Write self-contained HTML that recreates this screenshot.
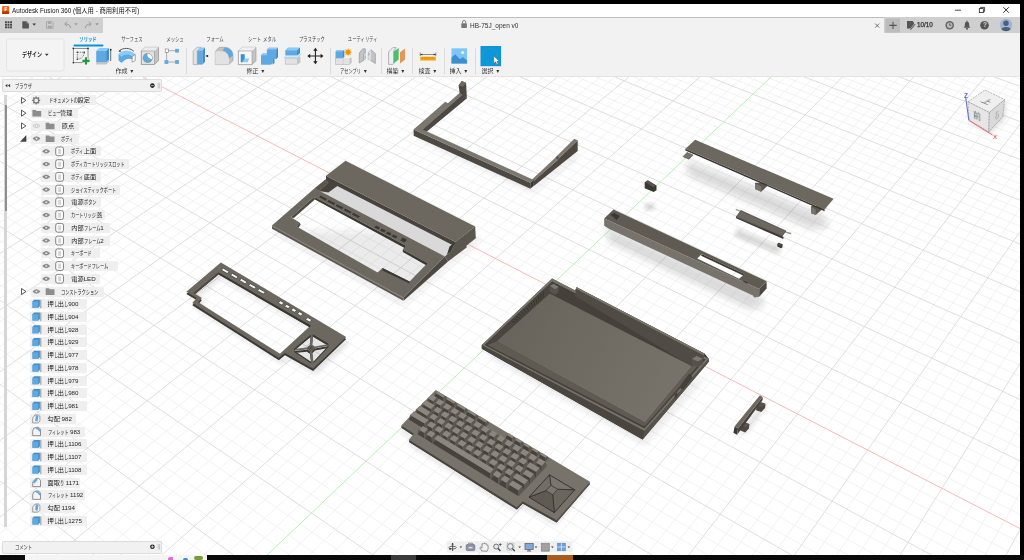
<!DOCTYPE html>
<html lang="ja"><head><meta charset="utf-8"><title>Autodesk Fusion 360</title>
<style>
*{box-sizing:border-box;margin:0;padding:0}
html,body{width:1024px;height:560px;overflow:hidden;background:#fff}
body{position:relative;font-family:"Liberation Sans","Noto Sans CJK JP",sans-serif;color:#222}
.abs{position:absolute}
.t{will-change:transform;position:absolute;white-space:nowrap;line-height:1;transform:translate(-50%,-50%)}
.tl{will-change:transform;position:absolute;white-space:nowrap;line-height:1;transform:translate(0,-50%)}
#blackTop{left:0;top:0;width:1024px;height:4px;background:#000}
#blackRight{left:1020px;top:0;width:4px;height:560px;background:#000}
#blackBot{left:0;top:555px;width:1024px;height:5px;background:#0a0a0a}
#titlebar{left:0;top:4px;width:1020px;height:13px;background:#fff}
#tabbar{left:0;top:16.5px;width:1020px;height:16.5px;background:#f2f2f2;border-top:1px solid #bdbdbd}
#qa{left:0;top:17px;width:102.5px;height:16px;background:#cfcfcf}
#rt{left:883.5px;top:17px;width:136.5px;height:16px;background:#cfcfcf}
#toolbar{left:0;top:33px;width:1020px;height:44px;background:#f2f2f2;border-bottom:1px solid #e4e4e4}
#viewport{left:0;top:77px;width:1020px;height:478px;background:#fff}
.sep{position:absolute;width:1px;background:#dadada;top:48px;height:26px}
.lbl{font-size:6.0px;color:#333}
.tab{font-size:6.2px;color:#444}
.ico{position:absolute;overflow:visible}
.row{will-change:transform;position:absolute;height:10px;background:rgba(238,238,238,.93);border-radius:1px}
.row>span{position:absolute;top:5px;transform:translateY(-50%);font-size:6.2px;line-height:1;white-space:nowrap;color:#222}

</style></head><body>
<div id="viewport" class="abs"><svg id="scene" width="1020" height="478" viewBox="0 77 1020 478">
<path d="M0.0,79.7L4.9,77.0M0.0,87.5L19.0,77.0M0.0,95.5L33.2,77.0M0.0,103.6L47.3,77.0M0.0,120.2L75.6,77.0M0.0,128.7L89.7,77.0M0.0,137.3L103.9,77.0M0.0,146.1L118.0,77.0M0.0,164.1L146.3,77.0M0.0,173.4L160.5,77.0M0.0,182.8L174.6,77.0M0.0,192.3L188.8,77.0M0.0,212.0L217.1,77.0M0.0,222.1L231.3,77.0M0.0,232.3L245.4,77.0M0.0,242.8L259.6,77.0M0.0,264.3L288.0,77.0M0.0,275.3L302.1,77.0M0.0,286.6L316.3,77.0M0.0,298.1L330.5,77.0M0.0,321.7L358.9,77.0M0.0,333.9L373.0,77.0M0.0,346.2L387.2,77.0M0.0,358.9L401.4,77.0M0.0,385.0L429.8,77.0M0.0,398.4L444.0,77.0M0.0,412.1L458.2,77.0M0.0,426.1L472.4,77.0M0.0,455.1L500.8,77.0M0.0,470.0L515.0,77.0M0.0,485.3L529.2,77.0M0.0,500.9L543.4,77.0M0.0,533.2L571.8,77.0M0.0,549.9L586.0,77.0M14.7,555.0L600.3,77.0M35.8,555.0L614.5,77.0M77.8,555.0L642.9,77.0M98.8,555.0L657.2,77.0M119.9,555.0L671.4,77.0M140.9,555.0L685.6,77.0M183.0,555.0L714.1,77.0M204.0,555.0L728.3,77.0M225.1,555.0L742.6,77.0M246.1,555.0L756.8,77.0M288.2,555.0L785.3,77.0M309.3,555.0L799.5,77.0M330.4,555.0L813.8,77.0M351.4,555.0L828.0,77.0M393.6,555.0L856.5,77.0M414.6,555.0L870.8,77.0M435.7,555.0L885.0,77.0M456.8,555.0L899.3,77.0M499.0,555.0L927.8,77.0M520.1,555.0L942.1,77.0M541.2,555.0L956.4,77.0M562.3,555.0L970.6,77.0M604.5,555.0L999.2,77.0M625.6,555.0L1013.5,77.0M646.7,555.0L1020.0,86.7M667.8,555.0L1020.0,105.1M710.0,555.0L1020.0,144.1M731.2,555.0L1020.0,164.7M752.3,555.0L1020.0,186.1M773.4,555.0L1020.0,208.4M815.7,555.0L1020.0,255.8M836.8,555.0L1020.0,281.0M858.0,555.0L1020.0,307.3M879.1,555.0L1020.0,334.8M921.4,555.0L1020.0,393.7M942.5,555.0L1020.0,425.2M963.7,555.0L1020.0,458.4M984.9,555.0L1020.0,493.2M0.0,546.0L10.9,555.0M0.0,523.7L38.7,555.0M0.0,501.9L66.5,555.0M0.0,460.4L122.2,555.0M0.0,440.6L150.0,555.0M0.0,421.3L177.8,555.0M0.0,402.6L205.7,555.0M0.0,366.6L261.4,555.0M0.0,349.4L289.3,555.0M0.0,332.6L317.1,555.0M0.0,316.2L345.0,555.0M0.0,284.8L400.8,555.0M0.0,269.6L428.6,555.0M0.0,254.9L456.5,555.0M0.0,240.5L484.4,555.0M0.0,212.8L540.2,555.0M0.0,199.4L568.2,555.0M0.0,186.3L596.1,555.0M0.0,173.6L624.0,555.0M0.0,148.9L679.9,555.0M0.0,137.0L707.8,555.0M0.0,125.4L735.8,555.0M0.0,114.0L763.7,555.0M0.0,92.0L819.6,555.0M0.0,81.3L847.6,555.0M11.2,77.0L875.6,555.0M30.0,77.0L903.5,555.0M67.6,77.0L959.5,555.0M86.4,77.0L987.5,555.0M105.2,77.0L1015.5,555.0M124.1,77.0L1020.0,542.8M161.8,77.0L1020.0,514.5M180.6,77.0L1020.0,500.7M199.4,77.0L1020.0,487.2M218.3,77.0L1020.0,474.0M256.0,77.0L1020.0,448.2M274.9,77.0L1020.0,435.7M293.7,77.0L1020.0,423.4M312.6,77.0L1020.0,411.4M350.3,77.0L1020.0,387.9M369.2,77.0L1020.0,376.4M388.1,77.0L1020.0,365.2M407.0,77.0L1020.0,354.2M444.8,77.0L1020.0,332.6M463.6,77.0L1020.0,322.1M482.6,77.0L1020.0,311.8M501.4,77.0L1020.0,301.7M539.3,77.0L1020.0,281.9M558.2,77.0L1020.0,272.2M577.1,77.0L1020.0,262.7M596.0,77.0L1020.0,253.3M633.9,77.0L1020.0,235.1M652.8,77.0L1020.0,226.1M671.8,77.0L1020.0,217.3M690.7,77.0L1020.0,208.7M728.6,77.0L1020.0,191.8M747.5,77.0L1020.0,183.5M766.5,77.0L1020.0,175.3M785.4,77.0L1020.0,167.3M823.4,77.0L1020.0,151.6M842.3,77.0L1020.0,143.9M861.3,77.0L1020.0,136.3M880.3,77.0L1020.0,128.9M918.2,77.0L1020.0,114.2M937.2,77.0L1020.0,107.1M956.2,77.0L1020.0,100.0M975.2,77.0L1020.0,93.0M1013.2,77.0L1020.0,79.4" stroke="#ececec" stroke-width=".7" fill="none"/><path d="M0.0,111.8L61.5,77.0M0.0,155.1L132.2,77.0M0.0,202.1L203.0,77.0M0.0,253.4L273.8,77.0M0.0,309.8L344.7,77.0M0.0,371.8L415.6,77.0M0.0,440.5L486.6,77.0M0.0,516.9L557.6,77.0M56.8,555.0L628.7,77.0M161.9,555.0L699.9,77.0M372.5,555.0L842.3,77.0M477.9,555.0L913.6,77.0M583.4,555.0L984.9,77.0M688.9,555.0L1020.0,124.2M794.5,555.0L1020.0,231.6M900.2,555.0L1020.0,363.6M1006.0,555.0L1020.0,529.8M0.0,480.9L94.3,555.0M0.0,384.3L233.5,555.0M0.0,300.3L372.9,555.0M0.0,226.5L512.3,555.0M0.0,161.1L651.9,555.0M0.0,102.9L791.7,555.0M48.8,77.0L931.5,555.0M237.1,77.0L1020.0,461.0M331.5,77.0L1020.0,399.5M425.9,77.0L1020.0,343.3M520.4,77.0L1020.0,291.7M615.0,77.0L1020.0,244.1M709.6,77.0L1020.0,200.2M804.4,77.0L1020.0,159.4M899.3,77.0L1020.0,121.5M994.2,77.0L1020.0,86.2" stroke="#d6d6d6" stroke-width=".8" fill="none"/><path d="M267.2,555.0L771.0,77.0" stroke="#aaf0aa" stroke-width=".9" fill="none"/><path d="M142.9,77.0L1020.0,528.5" stroke="#f8b0b0" stroke-width=".9" fill="none"/>
<defs><linearGradient id="gF" gradientUnits="userSpaceOnUse" x1="520" y1="320" x2="670" y2="400"><stop offset="0" stop-color="#69655d"/><stop offset="1" stop-color="#77736b"/></linearGradient><filter id="b1" x="-30%" y="-30%" width="160%" height="160%"><feGaussianBlur stdDeviation="1"/></filter><filter id="b2" x="-30%" y="-30%" width="160%" height="160%"><feGaussianBlur stdDeviation="2"/></filter><filter id="b3" x="-30%" y="-30%" width="160%" height="160%"><feGaussianBlur stdDeviation="3"/></filter><filter id="b4" x="-30%" y="-30%" width="160%" height="160%"><feGaussianBlur stdDeviation="4"/></filter></defs><polygon points="415.7,138.1 531.4,191.7 576.4,157.4 572.1,148.9 533.6,183.1 426.4,134.9" fill="rgba(40,40,40,0.1)" filter="url(#b3)"/><polygon points="421.1,130.6 462.4,94.2 466.7,98.5 426.4,132.1" fill="#4d4942" /><polygon points="413.6,129.6 445.3,101.7 447.9,103.2 460.3,92.3 462.9,94.4 421.1,131.1" fill="#7b776f" /><polygon points="458.6,85.6 461.8,81.1 466.1,82.9 466.9,98.7 462.4,94.9 459.6,92.7" fill="#4d4942" /><polygon points="458.6,85.6 461.8,81.1 466.1,82.9 463.3,86.7" fill="#6c6860" /><polygon points="533.6,181.0 557.6,160.0 559.7,157.4 577.7,140.3 577.7,151.0 533.8,186.1" fill="#4d4942" /><polygon points="529.9,181.4 555.0,158.1 557.6,160.0 533.6,181.4" fill="#7b776f" /><polygon points="557.6,155.3 574.3,138.8 577.7,140.3 559.7,157.4" fill="#7b776f" /><polygon points="555.0,158.1 557.6,155.3 559.7,157.4 557.6,160.0" fill="#5a564e" /><polygon points="413.6,129.6 530.3,182.7 530.3,188.7 413.6,135.8" fill="#4d4942" /><polygon points="530.3,182.7 533.8,180.1 533.8,185.7 530.3,188.7" fill="#3b3833" /><polygon points="413.6,129.6 417.0,127.0 533.8,180.1 530.3,182.7" fill="#7b776f" /><polygon points="686.7,160.0 824.2,216.0 829.0,227.0 811.0,229.0 688.4,175.8" fill="rgba(40,40,40,0.17)" filter="url(#b3)"/><polygon points="682.7,156.8 687.1,152.3 693.4,155.0 688.9,159.6" fill="#5c5850" /><polygon points="682.7,156.8 687.1,152.3 693.4,155.0 688.9,158.6" fill="#78746c" /><polygon points="755.0,182.7 767.5,182.7 767.5,185.7 761.2,191.8 755.0,189.1" fill="#5c5850" /><polygon points="755.0,183.6 761.2,186.2 761.2,191.8 755.0,189.1" fill="#78746c" /><polygon points="811.2,205.9 822.9,205.9 822.9,208.8 815.7,215.0 811.2,213.2" fill="#5c5850" /><polygon points="811.2,207.1 815.7,209.3 815.7,215.0 811.2,213.2" fill="#78746c" /><polygon points="685.4,148.8 824.6,209.5 824.6,211.2 685.4,150.4" fill="#3b3833" /><polygon points="695.2,139.8 833.6,198.8 824.6,209.5 685.4,148.8" fill="#6c6860" /><polygon points="737.0,229.0 781.0,248.0 779.0,254.0 735.0,236.0" fill="rgba(40,40,40,0.2)" filter="url(#b2)"/><polygon points="736.1,208.7 741.4,210.9 740.9,212.1 735.5,210.0" fill="#9a968e" /><polygon points="785.5,231.2 791.5,233.1 790.9,234.6 784.9,232.5" fill="#9a968e" /><polygon points="736.1,217.0 782.1,236.2 783.7,237.0 783.2,239.1 780.0,237.6 736.1,218.3" fill="#3b3833" /><polygon points="740.9,210.5 785.9,230.9 782.1,236.2 736.1,217.0" fill="#6c6860" stroke="#2f2c28" stroke-width=".6"/><polygon points="777.3,243.7 778.7,242.7 782.7,244.3 782.3,247.5 781.0,248.2 777.3,246.6" fill="#3b3833" /><polygon points="778.7,243.4 781.9,244.7 781.3,246.0 778.0,244.7" fill="#5a564e" /><polygon points="644.0,205.3 650.1,203.6 654.8,206.2 653.9,209.6 646.8,210.0" fill="rgba(40,40,40,0.22)" filter="url(#b2)"/><polygon points="644.7,182.2 647.9,180.2 656.5,185.4 656.5,190.3 653.7,192.0 644.7,188.2" fill="#3b3833" /><polygon points="645.3,182.2 648.1,180.7 655.8,185.6 653.5,187.3" fill="#5a564e" /><polygon points="606.0,226.0 760.0,296.0 764.0,306.5 749.5,309.0 609.0,242.0" fill="rgba(40,40,40,0.17)" filter="url(#b3)"/><polygon points="604.2,218.6 759.2,289.0 759.2,296.8 754.1,297.6 753.0,295.6 609.4,228.9 607.3,227.8 604.2,225.8" fill="#77736b" /><polygon points="759.2,289.0 766.6,281.2 766.6,288.6 759.2,296.8" fill="#4d4942" /><path d="M613.5,209.4L766.6,281.2L759.2,289.0L604.2,218.6ZM701.7,254.1L744.4,274.0L739.1,278.7L697.2,258.6Z" fill="#5f5b53" fill-rule="evenodd" /><polygon points="701.7,254.1 744.4,274.0 743.2,275.6 701.1,255.7" fill="#3b3833" /><polygon points="610.4,214.5 614.5,213.1 620.0,215.9 616.6,220.0" fill="#3b3833" /><polygon points="743.8,280.8 747.9,282.6 747.3,283.7 743.2,281.8" fill="#3b3833" /><polygon points="271.0,230.4 403.4,304.6 452.0,262.0 480.0,240.0 470.0,232.0" fill="rgba(40,40,40,0.1)" filter="url(#b3)"/><polygon points="326.0,180.0 455.3,246.3 444.9,256.4 314.6,188.2" fill="#d9d9d9" /><polygon points="326.0,180.0 339.4,184.6 328.4,192.4 318.6,190.9 328.4,183.0" fill="#47433c" /><polygon points="325.7,179.3 328.6,183.2 318.6,190.9 314.6,188.2" fill="#5a564e" /><polygon points="326.0,175.8 455.3,242.1 455.3,246.5 326.0,180.2" fill="#47433c" /><polygon points="345.5,160.8 475.2,226.5 455.3,242.1 326.0,175.8" fill="#6c6860" /><polygon points="455.3,242.1 475.2,226.5 475.8,238.3 466.6,245.6 466.6,247.4 448.0,261.6 444.9,256.4 451.0,251.5" fill="#5a564e" /><polygon points="455.3,242.1 451.0,251.5 444.9,256.4 447.0,254.5 449.5,246.5" fill="#3b3833" /><polygon points="444.9,256.4 448.0,261.6 403.6,300.8 403.4,297.6" fill="#4d4942" /><polygon points="272.0,225.4 403.4,297.6 403.4,300.8 272.0,228.8" fill="#5c5850" /><polygon points="272.0,225.4 403.4,297.6 403.4,298.8 272.0,226.6" fill="#8a867e" /><path d="M314.6,188.2L272.0,225.4L403.4,297.6L444.9,256.4ZM314.1,196.8L290.9,217.2L299.6,222.4L296.6,226.4L377.6,272.6L382.5,268.1L409.6,281.6L427.6,263.1L402.8,249.4L405.6,245.6Z" fill="#6c6860" fill-rule="evenodd" /><polygon points="314.1,196.8 405.6,245.6 404.6,248.0 314.9,199.6" fill="#3b3833" /><polygon points="402.8,249.4 427.6,263.1 426.2,265.3 402.8,252.0" fill="#3b3833" /><polygon points="314.1,196.8 290.9,217.2 293.5,218.2 314.9,199.6" fill="#4d4942" /><polygon points="299.6,222.4 296.6,226.4 298.6,227.8 300.6,224.6" fill="#4d4942" /><polygon points="382.5,268.1 409.6,281.6 409.6,283.6 382.5,270.5" fill="#3b3833" /><polygon points="320.4,195.6 327.0,199.0 325.8,200.7 319.2,197.3" fill="#3b3833" /><polygon points="328.6,199.9 335.2,203.3 334.0,205.0 327.4,201.6" fill="#3b3833" /><polygon points="336.8,204.2 343.4,207.6 342.2,209.3 335.6,205.9" fill="#3b3833" /><polygon points="345.0,208.5 351.6,211.9 350.4,213.6 343.8,210.2" fill="#3b3833" /><polygon points="353.2,212.7 359.8,216.2 358.6,217.9 352.0,214.4" fill="#3b3833" /><polygon points="376.0,225.4 380.1,227.6 378.5,229.6 374.4,227.4" fill="#3b3833" /><polygon points="381.7,228.4 385.9,230.6 384.2,232.6 380.1,230.4" fill="#3b3833" /><polygon points="387.5,231.4 391.6,233.6 390.0,235.6 385.9,233.4" fill="#3b3833" /><polygon points="393.2,234.4 397.4,236.6 395.8,238.6 391.6,236.4" fill="#3b3833" /><polygon points="402.6,237.6 407.0,239.8 404.6,242.6 400.4,240.4" fill="#3b3833" /><path d="M223.9,268.4L189.3,297.8L199.7,303.9L195.3,309.0L281.8,364.1L288.0,359.1L316.1,374.8L349.2,342.9ZM221.4,278.4L196.8,299.0L204.9,303.9L201.3,308.3L283.0,359.8L313.6,331.6Z" fill="rgba(40,40,40,.12)" fill-rule="evenodd" filter="url(#b2)"/><path d="M220.9,264.6L186.3,294.0L196.7,300.1L192.3,305.2L278.8,360.3L285.0,355.3L313.1,370.9L346.2,339.1ZM218.4,274.6L193.8,295.2L201.9,300.1L198.3,304.5L280.0,355.9L310.6,327.8ZM312.9,336.8L328.5,346.1L314.9,348.6L312.1,346.9ZM328.5,347.9L313.5,364.0L312.2,353.4L314.9,350.5ZM311.2,364.3L294.1,352.9L306.8,351.7L309.9,353.7ZM294.0,351.1L310.6,337.1L309.8,347.3L306.8,349.8Z" fill="#3b3833" fill-rule="evenodd" /><path d="M220.9,262.4L186.3,291.8L196.7,297.9L192.3,303.0L278.8,358.1L285.0,353.1L313.1,368.8L346.2,336.9ZM218.4,272.4L193.8,293.0L201.9,297.9L198.3,302.3L280.0,353.8L310.6,325.6ZM312.9,334.6L328.5,343.9L314.9,346.4L312.1,344.8ZM328.5,345.7L313.5,361.8L312.2,351.2L314.9,348.3ZM311.2,362.1L294.1,350.7L306.8,349.5L309.9,351.5ZM294.0,348.9L310.6,334.9L309.8,345.1L306.8,347.6Z" fill="#6c6860" fill-rule="evenodd" /><polygon points="218.4,272.4 310.6,325.6 309.8,327.2 219.0,274.2" fill="#3b3833" /><polygon points="218.4,272.4 193.8,293.0 195.4,293.6 219.0,274.2" fill="#4d4942" /><polygon points="312.9,334.6 328.5,343.9 328.5,345.2 312.9,335.9" fill="#3b3833" /><polygon points="328.5,345.7 313.5,361.8 313.5,363.1 328.5,347.0" fill="#3b3833" /><polygon points="311.2,362.1 294.1,350.7 294.1,352.0 311.2,363.4" fill="#3b3833" /><polygon points="294.0,348.9 310.6,334.9 310.6,336.2 294.0,350.2" fill="#3b3833" /><polygon points="310.6,345.7 313.6,348.1 310.6,350.5 307.6,348.1" fill="#6c6860" stroke="#3b3833" stroke-width=".6"/><polygon points="310.6,347.1 311.9,348.1 310.6,349.1 309.3,348.1" fill="#3b3833" /><polygon points="223.3,268.2 229.2,271.6 227.2,273.5 221.3,270.1" fill="#f4f4f4" stroke="#3b3833" stroke-width=".7"/><polygon points="232.4,273.4 238.2,276.7 236.2,278.6 230.4,275.3" fill="#f4f4f4" stroke="#3b3833" stroke-width=".7"/><polygon points="241.4,278.5 247.2,281.9 245.2,283.8 239.4,280.4" fill="#f4f4f4" stroke="#3b3833" stroke-width=".7"/><polygon points="250.4,283.7 256.3,287.0 254.3,288.9 248.4,285.6" fill="#f4f4f4" stroke="#3b3833" stroke-width=".7"/><polygon points="259.4,288.8 265.3,292.1 263.3,294.0 257.4,290.7" fill="#f4f4f4" stroke="#3b3833" stroke-width=".7"/><polygon points="280.4,300.8 283.9,302.8 281.7,305.0 278.2,303.0" fill="#f4f4f4" stroke="#3b3833" stroke-width=".7"/><polygon points="286.7,304.4 290.3,306.4 288.1,308.6 284.5,306.6" fill="#f4f4f4" stroke="#3b3833" stroke-width=".7"/><polygon points="293.1,308.0 296.7,310.1 294.5,312.3 290.9,310.2" fill="#f4f4f4" stroke="#3b3833" stroke-width=".7"/><polygon points="299.5,311.7 303.0,313.7 300.8,315.9 297.3,313.9" fill="#f4f4f4" stroke="#3b3833" stroke-width=".7"/><polygon points="307.7,317.5 311.9,319.8 309.7,322.0 305.5,319.7" fill="#f4f4f4" stroke="#3b3833" stroke-width=".7"/><polygon points="483.8,353.0 644.6,445.0 714.8,366.7 700.0,380.0" fill="rgba(40,40,40,0.1)" filter="url(#b3)"/><polygon points="552.1,278.6 575.0,290.4 576.6,287.2 704.7,353.7 708.8,358.7 708.8,361.7 642.6,439.6 481.8,348.8 481.8,345.0" fill="#3b3833" /><polygon points="481.8,345.0 644.6,431.0 642.6,439.6 481.8,348.8" fill="#4a463f" /><polygon points="644.6,431.0 708.8,358.7 708.8,361.7 642.6,439.6" fill="#57534b" /><polygon points="552.1,278.6 481.8,345.0 644.6,431.0 708.8,358.7" fill="#77736b" /><polygon points="552.2,281.6 484.6,344.9 644.5,428.6 705.6,359.6" fill="#45413a" /><polygon points="549.6,293.4 496.6,341.2 645.0,422.4 692.0,366.2" fill="url(#gF)" /><polygon points="576.6,287.2 704.7,353.7 703.0,359.5 692.0,366.2 574.8,296.0" fill="#504c45" /><polygon points="576.6,287.2 704.7,353.7 703.6,355.2 575.9,288.8" fill="#7a766e" /><polygon points="552.2,281.6 484.6,344.9 496.6,341.2 549.6,293.4" fill="#4a463f" /><path d="M543.3,291.2L543.1,297.8" stroke="#2f2c28" stroke-width=".7"/><path d="M540.9,293.5L541.0,299.7" stroke="#2f2c28" stroke-width=".7"/><path d="M538.4,295.8L539.0,301.6" stroke="#2f2c28" stroke-width=".7"/><path d="M535.9,298.1L536.9,303.4" stroke="#2f2c28" stroke-width=".7"/><path d="M533.5,300.4L534.8,305.3" stroke="#2f2c28" stroke-width=".7"/><path d="M531.0,302.7L532.7,307.2" stroke="#2f2c28" stroke-width=".7"/><path d="M528.6,305.0L530.7,309.0" stroke="#2f2c28" stroke-width=".7"/><path d="M526.1,307.3L528.6,310.9" stroke="#2f2c28" stroke-width=".7"/><path d="M523.6,309.6L526.5,312.8" stroke="#2f2c28" stroke-width=".7"/><path d="M521.2,311.9L524.4,314.7" stroke="#2f2c28" stroke-width=".7"/><path d="M518.7,314.2L522.4,316.5" stroke="#2f2c28" stroke-width=".7"/><path d="M516.2,316.5L520.3,318.4" stroke="#2f2c28" stroke-width=".7"/><path d="M513.8,318.8L518.2,320.3" stroke="#2f2c28" stroke-width=".7"/><path d="M511.3,321.1L516.1,322.1" stroke="#2f2c28" stroke-width=".7"/><polygon points="487.6,345.0 644.4,426.6 645.0,422.4 496.6,341.2" fill="#5f5b53" /><polygon points="692.0,366.2 645.0,422.4 644.6,426.4 702.4,360.6" fill="#625e56" /><polygon points="550.0,285.7 553.6,283.9 558.6,287.0 558.6,292.3 555.0,295.0 549.6,291.8" fill="#57534b" /><polygon points="550.0,285.7 553.6,283.9 558.6,287.0 555.0,289.3" fill="#7d7971" /><polygon points="691.9,358.8 696.6,355.9 702.8,358.8 702.8,364.0 697.5,367.2 691.9,364.4" fill="#57534b" /><polygon points="691.9,358.8 696.6,355.9 702.8,358.8 697.9,361.6" fill="#7d7971" /><polygon points="680.6,385.0 689.1,373.8 691.9,375.3 691.9,378.4 683.4,389.1 680.6,389.1" fill="#45413a" /><polygon points="674.6,394.4 677.3,392.1 677.3,396.3 674.6,398.5" fill="#45413a" /><polygon points="736.1,435.4 747.9,432.1 767.1,406.4 762.9,401.1" fill="rgba(40,40,40,0.12)" filter="url(#b2)"/><polygon points="740.9,425.7 744.1,422.0 749.5,424.1 748.9,428.4 745.2,432.4 740.4,430.5" fill="#4d4942" /><polygon points="741.4,425.5 744.2,422.5 749.1,424.4 746.4,427.4" fill="#5a564e" /><polygon points="757.0,405.9 760.7,402.1 765.5,403.8 765.0,408.0 761.3,412.0 755.9,410.2" fill="#4d4942" /><polygon points="757.5,405.7 760.8,402.7 765.2,404.1 762.0,407.3" fill="#5a564e" /><polygon points="738.0,428.4 762.6,397.0 762.6,400.0 737.1,434.8" fill="#45413a" /><polygon points="734.7,426.3 738.0,428.4 736.9,434.8 733.4,432.7" fill="#3b3833" /><polygon points="734.7,426.3 759.9,395.2 762.6,397.0 738.0,428.4" fill="#6c6860" /><polygon points="434.7,395.1 589.0,486.7 555.7,525.3 521.8,506.4 515.9,512.4 407.9,444.8 412.8,438.7 400.3,430.5" fill="rgba(40,40,40,0.12)" filter="url(#b2)"/><polygon points="435.9,392.3 589.9,483.9 556.6,522.5 522.8,503.6 516.9,509.6 409.1,442.0 414.0,436.0 401.5,427.7" fill="#3b3833" /><polygon points="556.7,520.3 522.8,501.4 522.8,503.6 556.6,522.5" fill="#4a463f" /><polygon points="516.9,507.4 408.9,439.8 409.1,442.0 516.9,509.6" fill="#4a463f" /><polygon points="413.8,433.7 401.3,425.5 401.5,427.7 414.0,436.0" fill="#4a463f" /><polygon points="590.0,481.7 556.7,520.3 556.6,522.5 589.9,483.9" fill="#57534b" /><polygon points="522.8,501.4 516.9,507.4 516.9,509.6 522.8,503.6" fill="#4a463f" /><polygon points="435.7,390.1 590.0,481.7 556.7,520.3 522.8,501.4 516.9,507.4 408.9,439.8 413.8,433.7 401.3,425.5" fill="#77736b" /><polygon points="434.2,396.2 443.6,401.7 443.3,397.4 435.8,393.0" fill="#47433c" /><polygon points="447.0,398.5 443.6,401.7 443.3,397.4 445.0,395.7" fill="#5d5951" /><polygon points="437.6,393.0 434.2,396.2 435.8,393.0 437.6,391.4" fill="#5a564e" /><polygon points="437.6,391.4 445.0,395.7 443.3,397.4 435.8,393.0" fill="#8b877f" /><polygon points="444.6,402.3 454.1,407.9 453.7,403.5 446.2,399.1" fill="#47433c" /><polygon points="457.4,404.7 454.1,407.9 453.7,403.5 455.4,401.9" fill="#5d5951" /><polygon points="447.9,399.1 444.6,402.3 446.2,399.1 447.9,397.5" fill="#5a564e" /><polygon points="447.9,397.5 455.4,401.9 453.7,403.5 446.2,399.1" fill="#8b877f" /><polygon points="455.0,408.5 464.6,414.1 464.3,409.8 456.7,405.3" fill="#47433c" /><polygon points="467.9,410.9 464.6,414.1 464.3,409.8 466.0,408.1" fill="#5d5951" /><polygon points="458.4,405.2 455.0,408.5 456.7,405.3 458.4,403.6" fill="#5a564e" /><polygon points="458.4,403.6 466.0,408.1 464.3,409.8 456.7,405.3" fill="#8b877f" /><polygon points="465.6,414.7 475.2,420.4 474.9,416.0 467.2,411.5" fill="#47433c" /><polygon points="478.6,417.1 475.2,420.4 474.9,416.0 476.6,414.4" fill="#5d5951" /><polygon points="468.9,411.4 465.6,414.7 467.2,411.5 469.0,409.8" fill="#5a564e" /><polygon points="469.0,409.8 476.6,414.4 474.9,416.0 467.2,411.5" fill="#8b877f" /><polygon points="476.2,421.0 486.0,426.8 485.7,422.4 477.9,417.8" fill="#47433c" /><polygon points="489.3,423.5 486.0,426.8 485.7,422.4 487.4,420.7" fill="#5d5951" /><polygon points="479.5,417.7 476.2,421.0 477.9,417.8 479.6,416.1" fill="#5a564e" /><polygon points="479.6,416.1 487.4,420.7 485.7,422.4 477.9,417.8" fill="#8b877f" /><polygon points="505.3,438.2 512.4,442.4 512.2,438.0 507.1,435.0" fill="#47433c" /><polygon points="515.7,439.0 512.4,442.4 512.2,438.0 513.9,436.3" fill="#5d5951" /><polygon points="508.6,434.8 505.3,438.2 507.1,435.0 508.8,433.3" fill="#5a564e" /><polygon points="508.8,433.3 513.9,436.3 512.2,438.0 507.1,435.0" fill="#8b877f" /><polygon points="513.4,443.0 520.7,447.3 520.4,442.9 515.3,439.9" fill="#47433c" /><polygon points="523.9,443.9 520.7,447.3 520.4,442.9 522.1,441.1" fill="#5d5951" /><polygon points="516.7,439.6 513.4,443.0 515.3,439.9 517.0,438.1" fill="#5a564e" /><polygon points="517.0,438.1 522.1,441.1 520.4,442.9 515.3,439.9" fill="#8b877f" /><polygon points="521.7,447.9 528.9,452.2 528.7,447.8 523.5,444.7" fill="#47433c" /><polygon points="532.2,448.8 528.9,452.2 528.7,447.8 530.4,446.0" fill="#5d5951" /><polygon points="524.9,444.5 521.7,447.9 523.5,444.7 525.2,443.0" fill="#5a564e" /><polygon points="525.2,443.0 530.4,446.0 528.7,447.8 523.5,444.7" fill="#8b877f" /><polygon points="529.9,452.8 537.3,457.1 537.0,452.7 531.8,449.6" fill="#47433c" /><polygon points="540.5,453.7 537.3,457.1 537.0,452.7 538.7,450.9" fill="#5d5951" /><polygon points="533.2,449.3 529.9,452.8 531.8,449.6 533.5,447.9" fill="#5a564e" /><polygon points="533.5,447.9 538.7,450.9 537.0,452.7 531.8,449.6" fill="#8b877f" /><polygon points="538.3,457.7 545.7,462.1 545.4,457.6 540.2,454.6" fill="#47433c" /><polygon points="548.9,458.6 545.7,462.1 545.4,457.6 547.1,455.9" fill="#5d5951" /><polygon points="541.5,454.3 538.3,457.7 540.2,454.6 541.9,452.8" fill="#5a564e" /><polygon points="541.9,452.8 547.1,455.9 545.4,457.6 540.2,454.6" fill="#8b877f" /><polygon points="426.7,402.9 433.5,407.0 433.0,401.2 428.1,398.3" fill="#47433c" /><polygon points="439.0,401.9 433.5,407.0 433.0,401.2 436.8,397.6" fill="#5d5951" /><polygon points="432.1,397.8 426.7,402.9 428.1,398.3 431.9,394.7" fill="#5a564e" /><polygon points="431.9,394.7 436.8,397.6 433.0,401.2 428.1,398.3" fill="#8b877f" /><polygon points="434.0,407.3 440.9,411.5 440.5,405.6 435.5,402.7" fill="#47433c" /><polygon points="446.3,406.3 440.9,411.5 440.5,405.6 444.2,402.0" fill="#5d5951" /><polygon points="439.4,402.2 434.0,407.3 435.5,402.7 439.3,399.1" fill="#5a564e" /><polygon points="439.3,399.1 444.2,402.0 440.5,405.6 435.5,402.7" fill="#8b877f" /><polygon points="441.4,411.7 448.4,415.9 447.9,410.0 442.9,407.1" fill="#47433c" /><polygon points="453.8,410.7 448.4,415.9 447.9,410.0 451.7,406.4" fill="#5d5951" /><polygon points="446.8,406.6 441.4,411.7 442.9,407.1 446.7,403.5" fill="#5a564e" /><polygon points="446.7,403.5 451.7,406.4 447.9,410.0 442.9,407.1" fill="#8b877f" /><polygon points="448.9,416.2 455.9,420.4 455.4,414.5 450.4,411.5" fill="#47433c" /><polygon points="461.3,415.1 455.9,420.4 455.4,414.5 459.2,410.9" fill="#5d5951" /><polygon points="454.2,411.0 448.9,416.2 450.4,411.5 454.2,407.9" fill="#5a564e" /><polygon points="454.2,407.9 459.2,410.9 455.4,414.5 450.4,411.5" fill="#8b877f" /><polygon points="456.4,420.7 463.4,424.9 463.0,419.0 458.0,416.0" fill="#47433c" /><polygon points="468.8,419.6 463.4,424.9 463.0,419.0 466.8,415.3" fill="#5d5951" /><polygon points="461.7,415.4 456.4,420.7 458.0,416.0 461.7,412.3" fill="#5a564e" /><polygon points="461.7,412.3 466.8,415.3 463.0,419.0 458.0,416.0" fill="#8b877f" /><polygon points="463.9,425.2 471.0,429.4 470.6,423.5 465.5,420.5" fill="#47433c" /><polygon points="476.4,424.1 471.0,429.4 470.6,423.5 474.4,419.8" fill="#5d5951" /><polygon points="469.3,419.9 463.9,425.2 465.5,420.5 469.3,416.8" fill="#5a564e" /><polygon points="469.3,416.8 474.4,419.8 470.6,423.5 465.5,420.5" fill="#8b877f" /><polygon points="471.5,429.7 478.7,434.0 478.3,428.1 473.2,425.0" fill="#47433c" /><polygon points="484.0,428.6 478.7,434.0 478.3,428.1 482.1,424.4" fill="#5d5951" /><polygon points="476.9,424.4 471.5,429.7 473.2,425.0 476.9,421.3" fill="#5a564e" /><polygon points="476.9,421.3 482.1,424.4 478.3,428.1 473.2,425.0" fill="#8b877f" /><polygon points="479.2,434.3 486.4,438.6 486.0,432.7 480.9,429.6" fill="#47433c" /><polygon points="491.7,433.2 486.4,438.6 486.0,432.7 489.8,428.9" fill="#5d5951" /><polygon points="484.5,428.9 479.2,434.3 480.9,429.6 484.6,425.9" fill="#5a564e" /><polygon points="484.6,425.9 489.8,428.9 486.0,432.7 480.9,429.6" fill="#8b877f" /><polygon points="486.9,438.9 494.1,443.2 493.8,437.3 488.6,434.2" fill="#47433c" /><polygon points="499.5,437.8 494.1,443.2 493.8,437.3 497.5,433.5" fill="#5d5951" /><polygon points="492.2,433.5 486.9,438.9 488.6,434.2 492.3,430.5" fill="#5a564e" /><polygon points="492.3,430.5 497.5,433.5 493.8,437.3 488.6,434.2" fill="#8b877f" /><polygon points="494.6,443.5 502.0,447.9 501.7,442.0 496.4,438.9" fill="#47433c" /><polygon points="507.3,442.4 502.0,447.9 501.7,442.0 505.4,438.2" fill="#5d5951" /><polygon points="500.0,438.1 494.6,443.5 496.4,438.9 500.1,435.1" fill="#5a564e" /><polygon points="500.1,435.1 505.4,438.2 501.7,442.0 496.4,438.9" fill="#8b877f" /><polygon points="502.5,448.2 509.8,452.6 509.5,446.7 504.3,443.5" fill="#47433c" /><polygon points="515.1,447.1 509.8,452.6 509.5,446.7 513.3,442.8" fill="#5d5951" /><polygon points="507.8,442.7 502.5,448.2 504.3,443.5 508.0,439.7" fill="#5a564e" /><polygon points="508.0,439.7 513.3,442.8 509.5,446.7 504.3,443.5" fill="#8b877f" /><polygon points="510.3,452.9 517.7,457.3 517.5,451.4 512.2,448.2" fill="#47433c" /><polygon points="523.0,451.8 517.7,457.3 517.5,451.4 521.2,447.5" fill="#5d5951" /><polygon points="515.6,447.4 510.3,452.9 512.2,448.2 515.9,444.4" fill="#5a564e" /><polygon points="515.9,444.4 521.2,447.5 517.5,451.4 512.2,448.2" fill="#8b877f" /><polygon points="518.2,457.6 525.7,462.1 525.5,456.1 520.1,453.0" fill="#47433c" /><polygon points="531.0,456.5 525.7,462.1 525.5,456.1 529.2,452.3" fill="#5d5951" /><polygon points="523.5,452.1 518.2,457.6 520.1,453.0 523.8,449.1" fill="#5a564e" /><polygon points="523.8,449.1 529.2,452.3 525.5,456.1 520.1,453.0" fill="#8b877f" /><polygon points="526.2,462.4 533.8,466.9 533.5,460.9 528.2,457.7" fill="#47433c" /><polygon points="539.0,461.3 533.8,466.9 533.5,460.9 537.2,457.0" fill="#5d5951" /><polygon points="531.5,456.8 526.2,462.4 528.2,457.7 531.8,453.8" fill="#5a564e" /><polygon points="531.8,453.8 537.2,457.0 533.5,460.9 528.2,457.7" fill="#8b877f" /><polygon points="534.3,467.2 541.8,471.7 541.7,465.7 536.2,462.5" fill="#47433c" /><polygon points="547.1,466.0 541.8,471.7 541.7,465.7 545.3,461.8" fill="#5d5951" /><polygon points="539.5,461.6 534.3,467.2 536.2,462.5 539.9,458.6" fill="#5a564e" /><polygon points="539.9,458.6 545.3,461.8 541.7,465.7 536.2,462.5" fill="#8b877f" /><polygon points="420.8,408.4 431.4,414.8 430.9,408.9 422.2,403.8" fill="#47433c" /><polygon points="436.8,409.6 431.4,414.8 430.9,408.9 434.7,405.3" fill="#5d5951" /><polygon points="426.3,403.3 420.8,408.4 422.2,403.8 426.1,400.2" fill="#5a564e" /><polygon points="426.1,400.2 434.7,405.3 430.9,408.9 422.2,403.8" fill="#8b877f" /><polygon points="431.9,415.1 438.8,419.3 438.3,413.4 433.4,410.4" fill="#47433c" /><polygon points="444.3,414.0 438.8,419.3 438.3,413.4 442.1,409.8" fill="#5d5951" /><polygon points="437.3,409.9 431.9,415.1 433.4,410.4 437.2,406.8" fill="#5a564e" /><polygon points="437.2,406.8 442.1,409.8 438.3,413.4 433.4,410.4" fill="#8b877f" /><polygon points="439.3,419.6 446.3,423.8 445.8,417.9 440.8,414.9" fill="#47433c" /><polygon points="451.7,418.5 446.3,423.8 445.8,417.9 449.6,414.2" fill="#5d5951" /><polygon points="444.7,414.3 439.3,419.6 440.8,414.9 444.6,411.2" fill="#5a564e" /><polygon points="444.6,411.2 449.6,414.2 445.8,417.9 440.8,414.9" fill="#8b877f" /><polygon points="446.8,424.1 453.8,428.3 453.4,422.4 448.3,419.4" fill="#47433c" /><polygon points="459.3,423.0 453.8,428.3 453.4,422.4 457.2,418.7" fill="#5d5951" /><polygon points="452.2,418.8 446.8,424.1 448.3,419.4 452.1,415.7" fill="#5a564e" /><polygon points="452.1,415.7 457.2,418.7 453.4,422.4 448.3,419.4" fill="#8b877f" /><polygon points="454.3,428.6 461.4,432.9 461.0,427.0 455.9,423.9" fill="#47433c" /><polygon points="466.8,427.5 461.4,432.9 461.0,427.0 464.8,423.3" fill="#5d5951" /><polygon points="459.7,423.3 454.3,428.6 455.9,423.9 459.7,420.2" fill="#5a564e" /><polygon points="459.7,420.2 464.8,423.3 461.0,427.0 455.9,423.9" fill="#8b877f" /><polygon points="461.9,433.1 469.1,437.5 468.7,431.6 463.5,428.5" fill="#47433c" /><polygon points="474.5,432.1 469.1,437.5 468.7,431.6 472.4,427.8" fill="#5d5951" /><polygon points="467.3,427.8 461.9,433.1 463.5,428.5 467.3,424.8" fill="#5a564e" /><polygon points="467.3,424.8 472.4,427.8 468.7,431.6 463.5,428.5" fill="#8b877f" /><polygon points="469.5,437.7 476.8,442.1 476.4,436.2 471.2,433.1" fill="#47433c" /><polygon points="482.1,436.7 476.8,442.1 476.4,436.2 480.1,432.4" fill="#5d5951" /><polygon points="474.9,432.4 469.5,437.7 471.2,433.1 475.0,429.3" fill="#5a564e" /><polygon points="475.0,429.3 480.1,432.4 476.4,436.2 471.2,433.1" fill="#8b877f" /><polygon points="477.2,442.4 484.5,446.7 484.1,440.8 479.0,437.7" fill="#47433c" /><polygon points="489.9,441.3 484.5,446.7 484.1,440.8 487.9,437.0" fill="#5d5951" /><polygon points="482.6,437.0 477.2,442.4 479.0,437.7 482.7,433.9" fill="#5a564e" /><polygon points="482.7,433.9 487.9,437.0 484.1,440.8 479.0,437.7" fill="#8b877f" /><polygon points="485.0,447.0 492.3,451.4 492.0,445.5 486.7,442.4" fill="#47433c" /><polygon points="497.7,445.9 492.3,451.4 492.0,445.5 495.7,441.7" fill="#5d5951" /><polygon points="490.4,441.6 485.0,447.0 486.7,442.4 490.5,438.6" fill="#5a564e" /><polygon points="490.5,438.6 495.7,441.7 492.0,445.5 486.7,442.4" fill="#8b877f" /><polygon points="492.8,451.7 500.2,456.1 499.8,450.2 494.6,447.1" fill="#47433c" /><polygon points="505.5,450.6 500.2,456.1 499.8,450.2 503.6,446.4" fill="#5d5951" /><polygon points="498.2,446.2 492.8,451.7 494.6,447.1 498.3,443.2" fill="#5a564e" /><polygon points="498.3,443.2 503.6,446.4 499.8,450.2 494.6,447.1" fill="#8b877f" /><polygon points="500.7,456.4 508.1,460.9 507.8,455.0 502.5,451.8" fill="#47433c" /><polygon points="513.4,455.3 508.1,460.9 507.8,455.0 511.5,451.1" fill="#5d5951" /><polygon points="506.0,450.9 500.7,456.4 502.5,451.8 506.2,447.9" fill="#5a564e" /><polygon points="506.2,447.9 511.5,451.1 507.8,455.0 502.5,451.8" fill="#8b877f" /><polygon points="508.6,461.2 516.0,465.7 515.8,459.7 510.4,456.5" fill="#47433c" /><polygon points="521.3,460.1 516.0,465.7 515.8,459.7 519.5,455.8" fill="#5d5951" /><polygon points="513.9,455.6 508.6,461.2 510.4,456.5 514.2,452.7" fill="#5a564e" /><polygon points="514.2,452.7 519.5,455.8 515.8,459.7 510.4,456.5" fill="#8b877f" /><polygon points="516.5,466.0 524.0,470.5 523.8,464.6 518.4,461.3" fill="#47433c" /><polygon points="529.4,464.9 524.0,470.5 523.8,464.6 527.5,460.6" fill="#5d5951" /><polygon points="521.9,460.4 516.5,466.0 518.4,461.3 522.1,457.4" fill="#5a564e" /><polygon points="522.1,457.4 527.5,460.6 523.8,464.6 518.4,461.3" fill="#8b877f" /><polygon points="524.6,470.8 536.2,477.8 536.0,471.8 526.5,466.2" fill="#47433c" /><polygon points="541.5,472.1 536.2,477.8 536.0,471.8 539.7,467.9" fill="#5d5951" /><polygon points="529.9,465.2 524.6,470.8 526.5,466.2 530.2,462.2" fill="#5a564e" /><polygon points="530.2,462.2 539.7,467.9 536.0,471.8 526.5,466.2" fill="#8b877f" /><polygon points="414.9,414.0 427.3,421.5 426.8,415.7 416.3,409.3" fill="#47433c" /><polygon points="432.8,416.3 427.3,421.5 426.8,415.7 430.7,412.0" fill="#5d5951" /><polygon points="420.4,408.8 414.9,414.0 416.3,409.3 420.2,405.7" fill="#5a564e" /><polygon points="420.2,405.7 430.7,412.0 426.8,415.7 416.3,409.3" fill="#8b877f" /><polygon points="427.8,421.8 434.8,426.0 434.3,420.2 429.3,417.2" fill="#47433c" /><polygon points="440.3,420.8 434.8,426.0 434.3,420.2 438.1,416.5" fill="#5d5951" /><polygon points="433.3,416.6 427.8,421.8 429.3,417.2 433.2,413.5" fill="#5a564e" /><polygon points="433.2,413.5 438.1,416.5 434.3,420.2 429.3,417.2" fill="#8b877f" /><polygon points="435.3,426.3 442.3,430.6 441.8,424.7 436.8,421.7" fill="#47433c" /><polygon points="447.8,425.3 442.3,430.6 441.8,424.7 445.7,421.0" fill="#5d5951" /><polygon points="440.8,421.1 435.3,426.3 436.8,421.7 440.6,418.0" fill="#5a564e" /><polygon points="440.6,418.0 445.7,421.0 441.8,424.7 436.8,421.7" fill="#8b877f" /><polygon points="442.8,430.9 449.9,435.2 449.4,429.3 444.3,426.2" fill="#47433c" /><polygon points="455.3,429.8 449.9,435.2 449.4,429.3 453.2,425.6" fill="#5d5951" /><polygon points="448.3,425.6 442.8,430.9 444.3,426.2 448.2,422.5" fill="#5a564e" /><polygon points="448.2,422.5 453.2,425.6 449.4,429.3 444.3,426.2" fill="#8b877f" /><polygon points="450.4,435.5 457.5,439.8 457.1,433.9 451.9,430.8" fill="#47433c" /><polygon points="462.9,434.4 457.5,439.8 457.1,433.9 460.9,430.1" fill="#5d5951" /><polygon points="455.8,430.1 450.4,435.5 451.9,430.8 455.8,427.1" fill="#5a564e" /><polygon points="455.8,427.1 460.9,430.1 457.1,433.9 451.9,430.8" fill="#8b877f" /><polygon points="458.0,440.1 465.1,444.4 464.7,438.5 459.6,435.4" fill="#47433c" /><polygon points="470.6,439.0 465.1,444.4 464.7,438.5 468.5,434.7" fill="#5d5951" /><polygon points="463.4,434.7 458.0,440.1 459.6,435.4 463.4,431.7" fill="#5a564e" /><polygon points="463.4,431.7 468.5,434.7 464.7,438.5 459.6,435.4" fill="#8b877f" /><polygon points="465.6,444.7 472.9,449.1 472.5,443.2 467.3,440.1" fill="#47433c" /><polygon points="478.3,443.6 472.9,449.1 472.5,443.2 476.3,439.4" fill="#5d5951" /><polygon points="471.1,439.3 465.6,444.7 467.3,440.1 471.1,436.3" fill="#5a564e" /><polygon points="471.1,436.3 476.3,439.4 472.5,443.2 467.3,440.1" fill="#8b877f" /><polygon points="473.4,449.4 480.6,453.8 480.3,447.9 475.1,444.7" fill="#47433c" /><polygon points="486.1,448.3 480.6,453.8 480.3,447.9 484.1,444.0" fill="#5d5951" /><polygon points="478.8,443.9 473.4,449.4 475.1,444.7 478.9,440.9" fill="#5a564e" /><polygon points="478.9,440.9 484.1,444.0 480.3,447.9 475.1,444.7" fill="#8b877f" /><polygon points="481.1,454.1 488.5,458.5 488.1,452.6 482.9,449.4" fill="#47433c" /><polygon points="493.9,453.0 488.5,458.5 488.1,452.6 491.9,448.7" fill="#5d5951" /><polygon points="486.6,448.6 481.1,454.1 482.9,449.4 486.7,445.6" fill="#5a564e" /><polygon points="486.7,445.6 491.9,448.7 488.1,452.6 482.9,449.4" fill="#8b877f" /><polygon points="489.0,458.8 496.3,463.3 496.0,457.4 490.7,454.2" fill="#47433c" /><polygon points="501.7,457.7 496.3,463.3 496.0,457.4 499.8,453.5" fill="#5d5951" /><polygon points="494.4,453.3 489.0,458.8 490.7,454.2 494.5,450.3" fill="#5a564e" /><polygon points="494.5,450.3 499.8,453.5 496.0,457.4 490.7,454.2" fill="#8b877f" /><polygon points="496.8,463.6 504.3,468.1 504.0,462.2 498.7,459.0" fill="#47433c" /><polygon points="509.7,462.5 504.3,468.1 504.0,462.2 507.7,458.3" fill="#5d5951" /><polygon points="502.2,458.0 496.8,463.6 498.7,459.0 502.4,455.1" fill="#5a564e" /><polygon points="502.4,455.1 507.7,458.3 504.0,462.2 498.7,459.0" fill="#8b877f" /><polygon points="504.8,468.4 512.3,472.9 512.0,467.0 506.6,463.8" fill="#47433c" /><polygon points="517.6,467.3 512.3,472.9 512.0,467.0 515.8,463.1" fill="#5d5951" /><polygon points="510.2,462.8 504.8,468.4 506.6,463.8 510.4,459.8" fill="#5a564e" /><polygon points="510.4,459.8 515.8,463.1 512.0,467.0 506.6,463.8" fill="#8b877f" /><polygon points="512.8,473.2 520.3,477.8 520.1,471.9 514.7,468.6" fill="#47433c" /><polygon points="525.7,472.1 520.3,477.8 520.1,471.9 523.8,467.9" fill="#5d5951" /><polygon points="518.1,467.6 512.8,473.2 514.7,468.6 518.4,464.7" fill="#5a564e" /><polygon points="518.4,464.7 523.8,467.9 520.1,471.9 514.7,468.6" fill="#8b877f" /><polygon points="520.8,478.1 530.5,483.9 530.2,478.0 522.8,473.5" fill="#47433c" /><polygon points="535.8,478.2 530.5,483.9 530.2,478.0 534.0,474.0" fill="#5d5951" /><polygon points="526.2,472.4 520.8,478.1 522.8,473.5 526.5,469.5" fill="#5a564e" /><polygon points="526.5,469.5 534.0,474.0 530.2,478.0 522.8,473.5" fill="#8b877f" /><polygon points="408.9,419.6 425.1,429.5 424.6,423.6 410.3,414.9" fill="#47433c" /><polygon points="430.7,424.2 425.1,429.5 424.6,423.6 428.5,419.9" fill="#5d5951" /><polygon points="414.5,414.4 408.9,419.6 410.3,414.9 414.2,411.3" fill="#5a564e" /><polygon points="414.2,411.3 428.5,419.9 424.6,423.6 410.3,414.9" fill="#8b877f" /><polygon points="425.6,429.8 432.6,434.0 432.1,428.2 427.1,425.1" fill="#47433c" /><polygon points="438.2,428.7 432.6,434.0 432.1,428.2 436.0,424.4" fill="#5d5951" /><polygon points="431.1,424.5 425.6,429.8 427.1,425.1 431.0,421.4" fill="#5a564e" /><polygon points="431.0,421.4 436.0,424.4 432.1,428.2 427.1,425.1" fill="#8b877f" /><polygon points="433.1,434.3 440.2,438.6 439.7,432.7 434.6,429.7" fill="#47433c" /><polygon points="445.7,433.3 440.2,438.6 439.7,432.7 443.6,429.0" fill="#5d5951" /><polygon points="438.6,429.0 433.1,434.3 434.6,429.7 438.5,425.9" fill="#5a564e" /><polygon points="438.5,425.9 443.6,429.0 439.7,432.7 434.6,429.7" fill="#8b877f" /><polygon points="440.7,438.9 447.8,443.3 447.3,437.4 442.2,434.3" fill="#47433c" /><polygon points="453.3,437.9 447.8,443.3 447.3,437.4 451.2,433.6" fill="#5d5951" /><polygon points="446.2,433.5 440.7,438.9 442.2,434.3 446.1,430.5" fill="#5a564e" /><polygon points="446.1,430.5 451.2,433.6 447.3,437.4 442.2,434.3" fill="#8b877f" /><polygon points="448.3,443.6 455.4,447.9 455.0,442.0 449.8,438.9" fill="#47433c" /><polygon points="460.9,442.5 455.4,447.9 455.0,442.0 458.8,438.2" fill="#5d5951" /><polygon points="453.8,438.1 448.3,443.6 449.8,438.9 453.7,435.1" fill="#5a564e" /><polygon points="453.7,435.1 458.8,438.2 455.0,442.0 449.8,438.9" fill="#8b877f" /><polygon points="455.9,448.2 463.1,452.6 462.7,446.7 457.5,443.6" fill="#47433c" /><polygon points="468.6,447.1 463.1,452.6 462.7,446.7 466.5,442.9" fill="#5d5951" /><polygon points="461.4,442.8 455.9,448.2 457.5,443.6 461.4,439.8" fill="#5a564e" /><polygon points="461.4,439.8 466.5,442.9 462.7,446.7 457.5,443.6" fill="#8b877f" /><polygon points="463.6,452.9 470.9,457.4 470.5,451.4 465.3,448.3" fill="#47433c" /><polygon points="476.4,451.8 470.9,457.4 470.5,451.4 474.3,447.6" fill="#5d5951" /><polygon points="469.1,447.4 463.6,452.9 465.3,448.3 469.1,444.4" fill="#5a564e" /><polygon points="469.1,444.4 474.3,447.6 470.5,451.4 465.3,448.3" fill="#8b877f" /><polygon points="471.4,457.7 478.7,462.1 478.3,456.2 473.1,453.0" fill="#47433c" /><polygon points="484.2,456.5 478.7,462.1 478.3,456.2 482.1,452.3" fill="#5d5951" /><polygon points="476.8,452.1 471.4,457.7 473.1,453.0 476.9,449.2" fill="#5a564e" /><polygon points="476.9,449.2 482.1,452.3 478.3,456.2 473.1,453.0" fill="#8b877f" /><polygon points="479.2,462.4 486.6,466.9 486.2,461.0 480.9,457.8" fill="#47433c" /><polygon points="492.0,461.3 486.6,466.9 486.2,461.0 490.0,457.1" fill="#5d5951" /><polygon points="484.7,456.8 479.2,462.4 480.9,457.8 484.7,453.9" fill="#5a564e" /><polygon points="484.7,453.9 490.0,457.1 486.2,461.0 480.9,457.8" fill="#8b877f" /><polygon points="487.1,467.2 494.5,471.7 494.2,465.8 488.8,462.6" fill="#47433c" /><polygon points="499.9,466.1 494.5,471.7 494.2,465.8 498.0,461.9" fill="#5d5951" /><polygon points="492.5,461.6 487.1,467.2 488.8,462.6 492.6,458.7" fill="#5a564e" /><polygon points="492.6,458.7 498.0,461.9 494.2,465.8 488.8,462.6" fill="#8b877f" /><polygon points="495.0,472.0 502.5,476.6 502.2,470.7 496.8,467.4" fill="#47433c" /><polygon points="507.9,470.9 502.5,476.6 502.2,470.7 505.9,466.7" fill="#5d5951" /><polygon points="500.4,466.4 495.0,472.0 496.8,467.4 500.6,463.5" fill="#5a564e" /><polygon points="500.6,463.5 505.9,466.7 502.2,470.7 496.8,467.4" fill="#8b877f" /><polygon points="503.0,476.9 510.5,481.5 510.2,475.5 504.8,472.3" fill="#47433c" /><polygon points="515.9,475.8 510.5,481.5 510.2,475.5 514.0,471.6" fill="#5d5951" /><polygon points="508.4,471.2 503.0,476.9 504.8,472.3 508.6,468.3" fill="#5a564e" /><polygon points="508.6,468.3 514.0,471.6 510.2,475.5 504.8,472.3" fill="#8b877f" /><polygon points="511.0,481.8 524.7,490.1 524.5,484.2 512.9,477.2" fill="#47433c" /><polygon points="530.1,484.4 524.7,490.1 524.5,484.2 528.2,480.2" fill="#5d5951" /><polygon points="516.4,476.1 511.0,481.8 512.9,477.2 516.7,473.2" fill="#5a564e" /><polygon points="516.7,473.2 528.2,480.2 524.5,484.2 512.9,477.2" fill="#8b877f" /><polygon points="417.6,434.2 424.6,438.5 424.1,432.7 419.0,429.6" fill="#47433c" /><polygon points="430.2,433.2 424.6,438.5 424.1,432.7 428.0,428.9" fill="#5d5951" /><polygon points="423.2,428.9 417.6,434.2 419.0,429.6 422.9,425.9" fill="#5a564e" /><polygon points="422.9,425.9 428.0,428.9 424.1,432.7 419.0,429.6" fill="#8b877f" /><polygon points="425.1,438.8 432.1,443.2 431.6,437.3 426.6,434.2" fill="#47433c" /><polygon points="437.7,437.8 432.1,443.2 431.6,437.3 435.5,433.5" fill="#5d5951" /><polygon points="430.6,433.5 425.1,438.8 426.6,434.2 430.5,430.4" fill="#5a564e" /><polygon points="430.5,430.4 435.5,433.5 431.6,437.3 426.6,434.2" fill="#8b877f" /><polygon points="432.6,443.5 490.4,478.9 490.1,473.0 434.1,438.8" fill="#47433c" /><polygon points="495.9,473.2 490.4,478.9 490.1,473.0 493.9,469.0" fill="#5d5951" /><polygon points="438.2,438.1 432.6,443.5 434.1,438.8 438.0,435.0" fill="#5a564e" /><polygon points="438.0,435.0 493.9,469.0 490.1,473.0 434.1,438.8" fill="#8b877f" /><polygon points="490.9,479.3 498.4,483.9 498.1,477.9 492.7,474.6" fill="#47433c" /><polygon points="503.9,478.1 498.4,483.9 498.1,477.9 501.9,473.9" fill="#5d5951" /><polygon points="496.4,473.5 490.9,479.3 492.7,474.6 496.6,470.6" fill="#5a564e" /><polygon points="496.6,470.6 501.9,473.9 498.1,477.9 492.7,474.6" fill="#8b877f" /><polygon points="498.9,484.2 506.5,488.8 506.2,482.8 500.8,479.5" fill="#47433c" /><polygon points="511.9,483.0 506.5,488.8 506.2,482.8 510.0,478.8" fill="#5d5951" /><polygon points="504.4,478.4 498.9,484.2 500.8,479.5 504.6,475.5" fill="#5a564e" /><polygon points="504.6,475.5 510.0,478.8 506.2,482.8 500.8,479.5" fill="#8b877f" /><polygon points="507.0,489.1 518.7,496.3 518.4,490.3 508.9,484.5" fill="#47433c" /><polygon points="524.1,490.4 518.7,496.3 518.4,490.3 522.2,486.3" fill="#5d5951" /><polygon points="512.4,483.3 507.0,489.1 508.9,484.5 512.7,480.5" fill="#5a564e" /><polygon points="512.7,480.5 522.2,486.3 518.4,490.3 508.9,484.5" fill="#8b877f" /><polygon points="549.5,474.9 574.6,489.9 554.3,512.6 529.0,497.1" fill="#6a665e" stroke="#3b3833" stroke-width=".7"/><polygon points="549.5,474.9 574.6,489.9 557.5,489.3 550.9,485.4" fill="#7a766e" stroke="#35322d" stroke-width=".8"/><polygon points="574.6,489.9 554.3,512.6 552.7,494.6 557.5,489.3" fill="#6a665e" stroke="#35322d" stroke-width=".8"/><polygon points="554.3,512.6 529.0,497.1 546.2,490.6 552.7,494.6" fill="#5f5b53" stroke="#35322d" stroke-width=".8"/><polygon points="529.0,497.1 549.5,474.9 550.9,485.4 546.2,490.6" fill="#726e66" stroke="#35322d" stroke-width=".8"/><polygon points="550.9,485.4 557.5,489.3 552.7,494.6 546.2,490.6" fill="#7b776f" stroke="#3b3833" stroke-width=".5"/>
</svg></div>
<div id="titlebar" class="abs"></div>
<div id="tabbar" class="abs"></div>
<div id="qa" class="abs"></div>
<div id="rt" class="abs"></div>
<div id="toolbar" class="abs"></div>
<div class="tl " style="left:12px;top:10.6px;font-size:6.3px;color:#111">Autodesk Fusion 360 (個人用 - 商用利用不可)</div>
<svg class="ico" style="left:0;top:0" width="1020" height="77" viewBox="0 0 1020 77"><rect x="2" y="6" width="7.2" height="8" rx="1.2" fill="#f26a1b"/><rect x="2" y="11.2" width="7.2" height="2.8" rx="1" fill="#b5380c"/><path d="M4.6,7.3h2.3v0.9h-1.3v0.8h1.1v0.9h-1.1v1.3h-1z" fill="#fff"/><rect x="5.0" y="21.3" width="1.9" height="1.9" fill="#444"/><rect x="5.0" y="23.85" width="1.9" height="1.9" fill="#444"/><rect x="5.0" y="26.4" width="1.9" height="1.9" fill="#444"/><rect x="7.55" y="21.3" width="1.9" height="1.9" fill="#444"/><rect x="7.55" y="23.85" width="1.9" height="1.9" fill="#444"/><rect x="7.55" y="26.4" width="1.9" height="1.9" fill="#444"/><rect x="10.1" y="21.3" width="1.9" height="1.9" fill="#444"/><rect x="10.1" y="23.85" width="1.9" height="1.9" fill="#444"/><rect x="10.1" y="26.4" width="1.9" height="1.9" fill="#444"/><path d="M22.3,21.2h4.2l2.4,2.4v5h-6.6z" fill="#555"/><path d="M26.5,21.2v2.4h2.4z" fill="#999"/><path d="M32.325,23.6 h3.75 l-1.875,2.25z" fill="#444"/><path d="M46.5,21.7h5.6l1,1v5.6h-6.6z" fill="none" stroke="#a6a6a6" stroke-width="0.9"/><rect x="48" y="21.7" width="3.2" height="2.2" fill="#a6a6a6"/><rect x="47.8" y="25.6" width="4" height="2.7" fill="#a6a6a6"/><path d="M70.5,28c0-3-2-4-5.5-4M67.2,21.6l-2.5,2.4l2.5,2.4" fill="none" stroke="#9a9a9a" stroke-width="1"/><path d="M74.2,23.24 h3.5999999999999996 l-1.7999999999999998,2.16z" fill="#9a9a9a"/><path d="M85.5,28c0-3,2-4,5.5-4M88.8,21.6l2.5,2.4l-2.5,2.4" fill="none" stroke="#9a9a9a" stroke-width="1"/><path d="M95.2,23.24 h3.5999999999999996 l-1.7999999999999998,2.16z" fill="#9a9a9a"/><rect x="461.3" y="23.3" width="5.6" height="4.6" rx=".6" fill="#777"/><path d="M462.5,23.3v-1.2a1.6,1.6 0 0 1 3.2,0v1.2" fill="none" stroke="#777" stroke-width=".9"/><path d="M875.2,23.6l4,4M879.2,23.6l-4,4" stroke="#555" stroke-width=".8"/><rect x="885.5" y="18.5" width="14.5" height="14" fill="#bcbcbc"/><path d="M889.3,25.4h7.4M893,21.7v7.4" stroke="#555" stroke-width="1.1"/><path d="M907,21h5.5l1.5,1.5v1.5l-3.4,4.6h-3.6z" fill="#555"/><path d="M910.3,29l4.3,-5.2l1,0.8l-4.3,5.2l-1.4,.5z" fill="#555" stroke="#cfcfcf" stroke-width=".4"/><circle cx="949.7" cy="25.2" r="4.3" fill="#666"/><circle cx="949.7" cy="25.2" r="2.7" fill="#bdbdbd"/><path d="M949.7,23.3v2h1.7" stroke="#555" stroke-width=".9" fill="none"/><path d="M963.6,27.8c1.2-1,1.2-2.2,1.2-3.6a2.2,2.4 0 0 1 4.4,0c0,1.4,0,2.6,1.2,3.6z" fill="#555"/><circle cx="967" cy="28.7" r="1" fill="#555"/><rect x="966.5" y="20.6" width="1" height="1.4" fill="#555"/><circle cx="984.5" cy="25.2" r="4.3" fill="#555"/><circle cx="1006" cy="25" r="6.2" fill="#9fb4cf"/><circle cx="1006" cy="23.3" r="2.7" fill="#4a5f7d"/><path d="M1001.3,29.2c.6-3,8.8-3,9.4,0a6.2,6.2 0 0 1-9.4,0z" fill="#4a5f7d"/><path d="M955,10.2h6" stroke="#222" stroke-width=".8"/><rect x="979.3" y="8.6" width="4" height="4" fill="#fff" stroke="#222" stroke-width=".8"/><path d="M980.6,8.6v-1.2h4v4h-1.3" fill="none" stroke="#222" stroke-width=".8"/><path d="M1003.3,7.2l5.6,5.6M1008.9,7.2l-5.6,5.6" stroke="#222" stroke-width=".9"/><rect x="6.5" y="39" width="57.5" height="32" rx="2.5" fill="#f4f4f4" stroke="#dfdfdf" stroke-width=".8"/><path d="M45.0,53.839999999999996 h3.5999999999999996 l-1.7999999999999998,2.16z" fill="#333"/><rect x="73.5" y="44.5" width="30" height="2" rx="1" fill="#0a94d8"/><rect x="73.3" y="48.4" width="14.7" height="14.3" fill="#f6f6f6" stroke="#666" stroke-width=".7"/><circle cx="73.3" cy="48.4" r=".8" fill="#222"/><circle cx="88" cy="48.4" r=".8" fill="#222"/><circle cx="73.3" cy="62.7" r=".8" fill="#222"/><path d="M77.3,52.2h7c0,4-3,7-7,7z" fill="#ececec" stroke="#555" stroke-width=".7" stroke-dasharray="1.6 .8"/><circle cx="77.3" cy="52.2" r=".8" fill="#333"/><circle cx="84.3" cy="52.2" r=".8" fill="#333"/><circle cx="77.3" cy="59.2" r=".8" fill="#333"/><path d="M86,57.2v7.4M82.3,60.9h7.4" stroke="#f2f2f2" stroke-width="3.2"/><path d="M86,57.3v7.2M82.4,60.9h7.2" stroke="#1f9a3c" stroke-width="2.1"/><path d="M96.2,62.1h9.9l2.9,-2.4v2.3l-2.9,2.5h-9.9z" fill="#c4c4c4"/><rect x="96.2" y="50.9" width="9.9" height="11.2" fill="#5fa9e2"/><path d="M96.2,50.9l2.9,-2.9h9.9l-2.9,2.9z" fill="#8ccbf9"/><path d="M106.1,50.9l2.9,-2.9v11.7l-2.9,2.4z" fill="#3d8fd1"/><path d="M110.7,50v11" stroke="#333" stroke-width=".7"/><circle cx="110.7" cy="49.7" r=".9" fill="#222"/><path d="M119.6,50.6c3.5,-3,10,-3,14.2,.6" fill="none" stroke="#333" stroke-width=".8"/><path d="M118.6,51.8l2.6,-.4l-1.3,-1.7z" fill="#222"/><path d="M118.6,54.2c4,-4.5,11,-4.8,16.6,.2l0,6.3c-5,-3.2,-9.6,-2.6,-13.6,2.4l-3,-2.6z" fill="#5fa9e2"/><path d="M118.6,54.2c4,-4.5,11,-4.8,16.6,.2l-3,2.2c-3.6,-3,-7.8,-2.4,-10.6,.2z" fill="#8ccbf9"/><path d="M132.2,56.6l3,-2.2v6.3l-3,1.5z" fill="#fafafa" stroke="#777" stroke-width=".6"/><path d="M141.3,51l4,-3.7h13.2v13.4l-4,3.7h-13.2z" fill="#c4c4c4" stroke="#888" stroke-width=".6"/><path d="M141.3,51l4,-3.7h13.2l-4,3.7z" fill="#ededed"/><rect x="141.3" y="51" width="13.2" height="13.4" fill="#e2e2e2" stroke="#888" stroke-width=".5"/><circle cx="147.7" cy="57.9" r="4.6" fill="#5fa9e2" stroke="#8a8a8a" stroke-width=".7"/><path d="M147.3,53.6a4.5,4.5 0 0 1 4.8,5.6a5,5 0 0 1-4.8,-5.6z" fill="#fff"/><path d="M166.8,50.7h10.2M166.5,62h10.5M166.6,50.7v11.3" stroke="#999" stroke-width=".8"/><rect x="165.2" y="49" width="3.3" height="3.5" fill="#fff" stroke="#777" stroke-width=".6"/><rect x="175.1" y="48.9" width="3.8" height="3.7" fill="#5fa9e2"/><rect x="164.5" y="60.1" width="3.8" height="3.8" fill="#5fa9e2"/><rect x="175.1" y="60.1" width="3.8" height="3.8" fill="#5fa9e2"/><path d="M193.2,51l4,-3.7h4l-3.9,3.7v13.6h-4.1z" fill="#e2e2e2" stroke="#999" stroke-width=".6"/><path d="M197.3,50.5l2.9,-2.9h4.8l-2.6,2.9z" fill="#8ccbf9"/><rect x="197.3" y="50.5" width="5.2" height="14.1" fill="#5fa9e2"/><path d="M202.5,50.5l2.5,-2.9v14.2l-2.5,2.8z" fill="#3d8fd1"/><path d="M204.3,55.9h2.6" stroke="#aaa" stroke-width="1.2"/><circle cx="207.3" cy="55.9" r="1" fill="#222"/><path d="M215.3,51.2l4,-3.9h5.5c4.5,0,8.2,3.6,8.2,8.3v5l-4,4h-13.7z" fill="#c4c4c4" stroke="#999" stroke-width=".6"/><path d="M215.3,51.2h6c4,0,7.5,3,7.7,8v5.4h-13.7z" fill="#e2e2e2"/><path d="M222.4,50.4l2.4,-2.9c4.5,0,8.2,3.6,8.2,8.1l-3.8,2.8c-.3,-4,-3,-7.4,-6.8,-8z" fill="#5fa9e2"/><path d="M238.3,51l4,-3.7h13.7v13.6l-4,3.7h-13.7z" fill="#c4c4c4" stroke="#999" stroke-width=".6"/><path d="M238.3,51l4,-3.7h13.7l-4,3.7z" fill="#f0f0f0"/><rect x="238.3" y="51" width="13.7" height="13.6" fill="#f7f7f7" stroke="#999" stroke-width=".6"/><path d="M240.8,54.2h3.8v4.3h4.6l-1.6,3.8h-6.8z" fill="#8ccbf9"/><path d="M240.8,54.2h3.8v4.3l-2.4,3.8h-1.4z" fill="#3d8fd1"/><path d="M261,55.3l1.6,-1.7h4.3v-4.1l1.7,-1.8h9.4v9.4l-1.7,1.8h-3.5v4l-1.8,1.8h-10z" fill="#5fa9e2"/><path d="M272.8,58.9l1.7,0l0,4l-1.8,1.8z" fill="#3d8fd1"/><path d="M276.3,49.5l1.7,-1.8v9.4l-1.7,1.8z" fill="#3d8fd1"/><path d="M266.9,49.5l1.7,-1.8h9.4l-1.7,1.8z" fill="#8ccbf9"/><path d="M261,55.3l1.6,-1.7h4.3v1.7z" fill="#8ccbf9"/><path d="M285.3,58.4h11.8l2.9,-1.6v5.5l-2.9,2h-11.8z" fill="#e2e2e2" stroke="#aaa" stroke-width=".5"/><path d="M297.1,58.4l2.9,-1.6v5.5l-2.9,2z" fill="#c4c4c4"/><path d="M285.3,50.4l2.7,-2.7h12v5.3l-2.9,2.6h-11.8z" fill="#5fa9e2"/><path d="M285.3,50.4l2.7,-2.7h12l-2.9,2.7z" fill="#8ccbf9"/><path d="M297.1,50.4l2.9,-2.7v5.3l-2.9,2.6z" fill="#3d8fd1"/><path d="M284,57.2h13.4l4,-3.4" fill="none" stroke="#8ccbf9" stroke-width=".9"/><path d="M315.4,49.5v13M308.8,56h13.2" stroke="#222" stroke-width="1.1"/><path d="M315.4,47.8l2.2,2.9h-4.4zM315.4,64.2l2.2,-2.9h-4.4zM307.3,56l2.9,-2.2v4.4zM323.5,56l-2.9,-2.2v4.4z" fill="#222"/><path d="M335.5,58h7.2l1.3,-1h5.8l1.4,1.2v4.8l-1.6,1.5h-14.1z" fill="#e2e2e2" stroke="#aaa" stroke-width=".5"/><path d="M343.2,58.2v6.3M335.5,58h7.7" stroke="#bbb" stroke-width=".5"/><path d="M349.6,58.2l1.6,-1.2v6l-1.6,1.5z" fill="#c4c4c4"/><path d="M343.3,57.8l1.4,-1.6h5.4l1,.8l-1.5,1.2z" fill="#f4f4f4"/><path d="M335.5,51.6l1.4,-1.4h7.3v6.4l-1.4,1.4h-7.3z" fill="#5fa9e2"/><path d="M335.5,51.6l1.4,-1.4h7.3l-1.4,1.4z" fill="#8ccbf9"/><path d="M342.8,51.6l1.4,-1.4v6.4l-1.4,1.4z" fill="#3d8fd1"/><polygon points="352.30,52.20 350.22,53.08 351.07,55.17 348.98,54.32 348.10,56.40 347.22,54.32 345.13,55.17 345.98,53.08 343.90,52.20 345.98,51.32 345.13,49.23 347.22,50.08 348.10,48.00 348.98,50.08 351.07,49.23 350.22,51.32" fill="#f8a31a"/><circle cx="348.1" cy="52.2" r="2.2" fill="#f39200"/><path d="M359.3,53l3.4,-4.2h2.6v3.6l-1.8,1.6v6.4l-4.2,2.6z" fill="#c4c4c4" stroke="#888" stroke-width=".6"/><path d="M363.5,54v6.4l1.8,-1.2v-6.8z" fill="#e2e2e2" stroke="#888" stroke-width=".4"/><path d="M368.3,52.6l2.5,-2.8l4.5,3.8v10l-4.5,-3.2l-2.5,-1.2z" fill="#c4c4c4" stroke="#888" stroke-width=".6"/><path d="M368.3,52.6l2.5,-2.8v10.6l-2.5,-1.2z" fill="#e2e2e2"/><path d="M364.6,55.4l1.2,2l-1,1.4zM368.6,52.2l1.1,1.8l-1.2,2z" fill="#5fa9e2"/><path d="M388.6,52l4.2,-4.4h3.4l-2.5,3.4v12.8l-1,.6h-4.1z" fill="#efefef" stroke="#999" stroke-width=".7"/><path d="M393.7,51.5l5,-3.6v11.6l-5,4z" fill="#4dbd74"/><path d="M400,52.3l5,-3.8v11.3l-5,3.8z" fill="#e8955a"/><path d="M420.3,54.5h15.5M420.3,52.6v3.6M435.8,52.6v3.6" stroke="#444" stroke-width=".6" fill="none"/><path d="M420.5,54.5l1.8,-.9v1.8zM435.6,54.5l-1.8,-.9v1.8z" fill="#333"/><rect x="420.3" y="56.8" width="15.5" height="3.7" rx=".6" fill="#f5a10e"/><path d="M422.5,57v1.5M425,57v1.5M427.5,57v1.5M430,57v1.5M432.5,57v1.5" stroke="#c77700" stroke-width=".5"/><rect x="451.5" y="48.3" width="15.6" height="15.3" fill="#7cc6fa"/><path d="M451.5,63.6v-5.8l3.6,-3.6l3,3l2,2l2.6,-2.2l4.4,3.6v3z" fill="#3d8fd1"/><circle cx="462.6" cy="52.4" r="1.5" fill="#fff3b0"/><rect x="480.5" y="46" width="20.6" height="20.2" fill="#0d96dc"/><circle cx="489.8" cy="55.3" r="7" fill="none" stroke="#2bb673" stroke-width=".7" stroke-dasharray="1.4 1.2"/><path d="M493.8,56v7.4l1.8,-1.6l1.3,2.9l1.3,-.6l-1.3,-2.8h2.4z" fill="#fff" stroke="#555" stroke-width=".5"/></svg>
<div class="tl " style="left:469.5px;top:25.6px;font-size:6.5px;color:#333">HB-75J_open v0</div>
<div class="tl " style="left:917px;top:25.4px;font-size:6.3px;color:#333;-webkit-text-stroke:.25px #333">10/10</div>
<div class="t " style="left:984.5px;top:25.4px;font-size:6.5px;color:#d8d8d8;font-weight:bold">?</div>
<div class="t " style="left:32px;top:54.6px;font-size:6.6px;color:#222;font-weight:bold"><span style="display:inline-block;width:20.06px;vertical-align:top"><span style="display:inline-block;transform:scaleX(0.76);transform-origin:0 50%">デザイン</span></span></div>
<div class="t tab" style="left:131.5px;top:39.3px;"><span style="display:inline-block;width:21.70px;vertical-align:top"><span style="display:inline-block;transform:scaleX(0.7);transform-origin:0 50%">サーフェス</span></span></div>
<div class="t tab" style="left:175px;top:39.3px;"><span style="display:inline-block;width:17.36px;vertical-align:top"><span style="display:inline-block;transform:scaleX(0.7);transform-origin:0 50%">メッシュ</span></span></div>
<div class="t tab" style="left:214.5px;top:39.3px;"><span style="display:inline-block;width:17.36px;vertical-align:top"><span style="display:inline-block;transform:scaleX(0.7);transform-origin:0 50%">フォーム</span></span></div>
<div class="t tab" style="left:261.6px;top:39.3px;"><span style="display:inline-block;width:13.02px;vertical-align:top"><span style="display:inline-block;transform:scaleX(0.7);transform-origin:0 50%">シート</span></span> <span style="display:inline-block;width:13.02px;vertical-align:top"><span style="display:inline-block;transform:scaleX(0.7);transform-origin:0 50%">メタル</span></span></div>
<div class="t tab" style="left:311.7px;top:39.3px;"><span style="display:inline-block;width:26.04px;vertical-align:top"><span style="display:inline-block;transform:scaleX(0.7);transform-origin:0 50%">プラスチック</span></span></div>
<div class="t tab" style="left:363px;top:39.3px;"><span style="display:inline-block;width:30.38px;vertical-align:top"><span style="display:inline-block;transform:scaleX(0.7);transform-origin:0 50%">ユーティリティ</span></span></div>
<div class="t tab" style="left:88px;top:39.3px;color:#0a8fd6;font-weight:bold"><span style="display:inline-block;width:17.36px;vertical-align:top"><span style="display:inline-block;transform:scaleX(0.7);transform-origin:0 50%">ソリッド</span></span></div>
<div class="t lbl" style="left:124.6px;top:71.2px;">作成 <span style="font-size:5.2px;vertical-align:.3px">▼</span></div>
<div class="t lbl" style="left:256px;top:71.2px;">修正 <span style="font-size:5.2px;vertical-align:.3px">▼</span></div>
<div class="t lbl" style="left:354px;top:71.2px;"><span style="display:inline-block;width:21.00px;vertical-align:top"><span style="display:inline-block;transform:scaleX(0.7);transform-origin:0 50%">アセンブリ</span></span> <span style="font-size:5.2px;vertical-align:.3px">▼</span></div>
<div class="t lbl" style="left:396.2px;top:71.2px;">構築 <span style="font-size:5.2px;vertical-align:.3px">▼</span></div>
<div class="t lbl" style="left:427.5px;top:71.2px;">検査 <span style="font-size:5.2px;vertical-align:.3px">▼</span></div>
<div class="t lbl" style="left:459px;top:71.2px;">挿入 <span style="font-size:5.2px;vertical-align:.3px">▼</span></div>
<div class="t lbl" style="left:491px;top:71.2px;">選択 <span style="font-size:5.2px;vertical-align:.3px">▼</span></div>
<div class="sep" style="left:186.4px"></div>
<div class="sep" style="left:329.6px"></div>
<div class="sep" style="left:380.5px"></div>
<div class="sep" style="left:412.2px"></div>
<div class="sep" style="left:443.6px"></div>
<div class="sep" style="left:474.5px"></div>
<div class="abs" style="left:2px;top:79.3px;width:159.5px;height:12.6px;background:#f1f1f1;border:1px solid #dcdcdc;border-radius:1px"></div>
<div class="tl" style="left:15px;top:85.6px;font-size:6.1px;color:#333"><span style="display:inline-block;width:17.08px;vertical-align:top"><span style="display:inline-block;transform:scaleX(0.7);transform-origin:0 50%">ブラウザ</span></span></div>
<div class="abs" style="left:3.9px;top:95px;width:3.6px;height:432px;background:#d6d6d6"></div>
<div class="abs" style="left:4.5px;top:105px;width:2.4px;height:106px;background:#8f8f8f"></div>
<div class="row" style="left:30.7px;top:95.40px;width:64.8px"><span style="left:17.500000000000004px"><span style="display:inline-block;width:29.08px;vertical-align:top"><span style="display:inline-block;transform:scaleX(0.67);transform-origin:0 50%">ドキュメントの</span></span>設定</span></div>
<div class="row" style="left:30.7px;top:108.14px;width:47.3px"><span style="left:16.599999999999998px"><span style="display:inline-block;width:12.46px;vertical-align:top"><span style="display:inline-block;transform:scaleX(0.67);transform-origin:0 50%">ビュー</span></span>管理</span></div>
<div class="row" style="left:30.7px;top:120.88px;width:48.3px"><span style="left:30.8px">原点</span></div>
<div class="row" style="left:30.7px;top:133.62px;width:48.3px"><span style="left:30.3px"><span style="display:inline-block;width:12.46px;vertical-align:top"><span style="display:inline-block;transform:scaleX(0.67);transform-origin:0 50%">ボディ</span></span></span></div>
<div class="row" style="left:40.7px;top:146.36px;width:59.8px"><span style="left:30.299999999999997px"><span style="display:inline-block;width:12.46px;vertical-align:top"><span style="display:inline-block;transform:scaleX(0.67);transform-origin:0 50%">ボディ</span></span>上面</span></div>
<div class="row" style="left:40.7px;top:159.10px;width:88.3px"><span style="left:30.299999999999997px"><span style="display:inline-block;width:54.00px;vertical-align:top"><span style="display:inline-block;transform:scaleX(0.67);transform-origin:0 50%">ボディカートリッジスロット</span></span></span></div>
<div class="row" style="left:40.7px;top:171.84px;width:59.8px"><span style="left:30.299999999999997px"><span style="display:inline-block;width:12.46px;vertical-align:top"><span style="display:inline-block;transform:scaleX(0.67);transform-origin:0 50%">ボディ</span></span>底面</span></div>
<div class="row" style="left:40.7px;top:184.58px;width:79.3px"><span style="left:30.299999999999997px"><span style="display:inline-block;width:45.69px;vertical-align:top"><span style="display:inline-block;transform:scaleX(0.67);transform-origin:0 50%">ジョイスティックポート</span></span></span></div>
<div class="row" style="left:40.7px;top:197.32px;width:59.8px"><span style="left:30.299999999999997px">電源<span style="display:inline-block;width:12.46px;vertical-align:top"><span style="display:inline-block;transform:scaleX(0.67);transform-origin:0 50%">ボタン</span></span></span></div>
<div class="row" style="left:40.7px;top:210.06px;width:64.3px"><span style="left:30.299999999999997px"><span style="display:inline-block;width:24.92px;vertical-align:top"><span style="display:inline-block;transform:scaleX(0.67);transform-origin:0 50%">カートリッジ</span></span>蓋</span></div>
<div class="row" style="left:40.7px;top:222.80px;width:69.3px"><span style="left:30.299999999999997px">内部<span style="display:inline-block;width:16.62px;vertical-align:top"><span style="display:inline-block;transform:scaleX(0.67);transform-origin:0 50%">フレーム</span></span>1</span></div>
<div class="row" style="left:40.7px;top:235.54px;width:69.3px"><span style="left:30.299999999999997px">内部<span style="display:inline-block;width:16.62px;vertical-align:top"><span style="display:inline-block;transform:scaleX(0.67);transform-origin:0 50%">フレーム</span></span>2</span></div>
<div class="row" style="left:40.7px;top:248.28px;width:59.3px"><span style="left:30.299999999999997px"><span style="display:inline-block;width:20.77px;vertical-align:top"><span style="display:inline-block;transform:scaleX(0.67);transform-origin:0 50%">キーボード</span></span></span></div>
<div class="row" style="left:40.7px;top:261.02px;width:76.8px"><span style="left:30.299999999999997px"><span style="display:inline-block;width:37.39px;vertical-align:top"><span style="display:inline-block;transform:scaleX(0.67);transform-origin:0 50%">キーボードフレーム</span></span></span></div>
<div class="row" style="left:40.7px;top:273.76px;width:59.3px"><span style="left:30.299999999999997px">電源LED</span></div>
<div class="row" style="left:30.7px;top:286.50px;width:73.3px"><span style="left:30.3px"><span style="display:inline-block;width:37.39px;vertical-align:top"><span style="display:inline-block;transform:scaleX(0.67);transform-origin:0 50%">コンストラクション</span></span></span></div>
<div class="row" style="left:30px;top:299.24px;width:56.5px"><span style="left:17.5px">押<span style="display:inline-block;width:4.15px;vertical-align:top"><span style="display:inline-block;transform:scaleX(0.67);transform-origin:0 50%">し</span></span>出<span style="display:inline-block;width:4.15px;vertical-align:top"><span style="display:inline-block;transform:scaleX(0.67);transform-origin:0 50%">し</span></span>900</span></div>
<div class="row" style="left:30px;top:311.98px;width:56.5px"><span style="left:17.5px">押<span style="display:inline-block;width:4.15px;vertical-align:top"><span style="display:inline-block;transform:scaleX(0.67);transform-origin:0 50%">し</span></span>出<span style="display:inline-block;width:4.15px;vertical-align:top"><span style="display:inline-block;transform:scaleX(0.67);transform-origin:0 50%">し</span></span>904</span></div>
<div class="row" style="left:30px;top:324.72px;width:56.5px"><span style="left:17.5px">押<span style="display:inline-block;width:4.15px;vertical-align:top"><span style="display:inline-block;transform:scaleX(0.67);transform-origin:0 50%">し</span></span>出<span style="display:inline-block;width:4.15px;vertical-align:top"><span style="display:inline-block;transform:scaleX(0.67);transform-origin:0 50%">し</span></span>928</span></div>
<div class="row" style="left:30px;top:337.46px;width:56.5px"><span style="left:17.5px">押<span style="display:inline-block;width:4.15px;vertical-align:top"><span style="display:inline-block;transform:scaleX(0.67);transform-origin:0 50%">し</span></span>出<span style="display:inline-block;width:4.15px;vertical-align:top"><span style="display:inline-block;transform:scaleX(0.67);transform-origin:0 50%">し</span></span>929</span></div>
<div class="row" style="left:30px;top:350.20px;width:56.5px"><span style="left:17.5px">押<span style="display:inline-block;width:4.15px;vertical-align:top"><span style="display:inline-block;transform:scaleX(0.67);transform-origin:0 50%">し</span></span>出<span style="display:inline-block;width:4.15px;vertical-align:top"><span style="display:inline-block;transform:scaleX(0.67);transform-origin:0 50%">し</span></span>977</span></div>
<div class="row" style="left:30px;top:362.94px;width:56.5px"><span style="left:17.5px">押<span style="display:inline-block;width:4.15px;vertical-align:top"><span style="display:inline-block;transform:scaleX(0.67);transform-origin:0 50%">し</span></span>出<span style="display:inline-block;width:4.15px;vertical-align:top"><span style="display:inline-block;transform:scaleX(0.67);transform-origin:0 50%">し</span></span>978</span></div>
<div class="row" style="left:30px;top:375.68px;width:56.5px"><span style="left:17.5px">押<span style="display:inline-block;width:4.15px;vertical-align:top"><span style="display:inline-block;transform:scaleX(0.67);transform-origin:0 50%">し</span></span>出<span style="display:inline-block;width:4.15px;vertical-align:top"><span style="display:inline-block;transform:scaleX(0.67);transform-origin:0 50%">し</span></span>979</span></div>
<div class="row" style="left:30px;top:388.42px;width:56.5px"><span style="left:17.5px">押<span style="display:inline-block;width:4.15px;vertical-align:top"><span style="display:inline-block;transform:scaleX(0.67);transform-origin:0 50%">し</span></span>出<span style="display:inline-block;width:4.15px;vertical-align:top"><span style="display:inline-block;transform:scaleX(0.67);transform-origin:0 50%">し</span></span>980</span></div>
<div class="row" style="left:30px;top:401.16px;width:56.5px"><span style="left:17.5px">押<span style="display:inline-block;width:4.15px;vertical-align:top"><span style="display:inline-block;transform:scaleX(0.67);transform-origin:0 50%">し</span></span>出<span style="display:inline-block;width:4.15px;vertical-align:top"><span style="display:inline-block;transform:scaleX(0.67);transform-origin:0 50%">し</span></span>981</span></div>
<div class="row" style="left:30px;top:413.90px;width:46px"><span style="left:17.5px">勾配 982</span></div>
<div class="row" style="left:30px;top:426.64px;width:54.5px"><span style="left:17.5px"><span style="display:inline-block;width:20.77px;vertical-align:top"><span style="display:inline-block;transform:scaleX(0.67);transform-origin:0 50%">フィレット</span></span> 983</span></div>
<div class="row" style="left:30px;top:439.38px;width:56.5px"><span style="left:17.5px">押<span style="display:inline-block;width:4.15px;vertical-align:top"><span style="display:inline-block;transform:scaleX(0.67);transform-origin:0 50%">し</span></span>出<span style="display:inline-block;width:4.15px;vertical-align:top"><span style="display:inline-block;transform:scaleX(0.67);transform-origin:0 50%">し</span></span>1106</span></div>
<div class="row" style="left:30px;top:452.12px;width:56.5px"><span style="left:17.5px">押<span style="display:inline-block;width:4.15px;vertical-align:top"><span style="display:inline-block;transform:scaleX(0.67);transform-origin:0 50%">し</span></span>出<span style="display:inline-block;width:4.15px;vertical-align:top"><span style="display:inline-block;transform:scaleX(0.67);transform-origin:0 50%">し</span></span>1107</span></div>
<div class="row" style="left:30px;top:464.86px;width:56.5px"><span style="left:17.5px">押<span style="display:inline-block;width:4.15px;vertical-align:top"><span style="display:inline-block;transform:scaleX(0.67);transform-origin:0 50%">し</span></span>出<span style="display:inline-block;width:4.15px;vertical-align:top"><span style="display:inline-block;transform:scaleX(0.67);transform-origin:0 50%">し</span></span>1108</span></div>
<div class="row" style="left:30px;top:477.60px;width:50px"><span style="left:17.5px">面取<span style="display:inline-block;width:4.15px;vertical-align:top"><span style="display:inline-block;transform:scaleX(0.67);transform-origin:0 50%">り</span></span> 1171</span></div>
<div class="row" style="left:30px;top:490.34px;width:54.5px"><span style="left:17.5px"><span style="display:inline-block;width:20.77px;vertical-align:top"><span style="display:inline-block;transform:scaleX(0.67);transform-origin:0 50%">フィレット</span></span> 1192</span></div>
<div class="row" style="left:30px;top:503.08px;width:46px"><span style="left:17.5px">勾配 1194</span></div>
<div class="row" style="left:30px;top:515.82px;width:56.5px"><span style="left:17.5px">押<span style="display:inline-block;width:4.15px;vertical-align:top"><span style="display:inline-block;transform:scaleX(0.67);transform-origin:0 50%">し</span></span>出<span style="display:inline-block;width:4.15px;vertical-align:top"><span style="display:inline-block;transform:scaleX(0.67);transform-origin:0 50%">し</span></span>1275</span></div>
<div class="abs" style="left:2px;top:540.5px;width:159.5px;height:13.2px;background:#f1f1f1;border:1px solid #dcdcdc;border-radius:1px"></div>
<div class="tl" style="left:14.5px;top:547px;font-size:6.1px;color:#333"><span style="display:inline-block;width:17.08px;vertical-align:top"><span style="display:inline-block;transform:scaleX(0.7);transform-origin:0 50%">コメント</span></span></div>
<svg class="ico" style="left:0;top:0" width="200" height="560" viewBox="0 0 200 560"><path d="M5.2,85.6l2.2,-1.6v3.2zM7.9,85.6l2.2,-1.6v3.2z" fill="#333"/><circle cx="152.4" cy="85.6" r="2.3" fill="#222"/><path d="M151,85.6h2.8" stroke="#eee" stroke-width=".7"/><path d="M158.2,82.8v5.6M159.6,82.8v5.6" stroke="#aaa" stroke-width=".6"/><path d="M21.5,97.4l4.4,3l-4.4,3z" fill="none" stroke="#333" stroke-width=".8"/><path d="M38.40,100.40L40.20,100.40" stroke="#7a7a7a" stroke-width="1.3"/><path d="M37.76,101.96L39.03,103.23" stroke="#7a7a7a" stroke-width="1.3"/><path d="M36.20,102.60L36.20,104.40" stroke="#7a7a7a" stroke-width="1.3"/><path d="M34.64,101.96L33.37,103.23" stroke="#7a7a7a" stroke-width="1.3"/><path d="M34.00,100.40L32.20,100.40" stroke="#7a7a7a" stroke-width="1.3"/><path d="M34.64,98.84L33.37,97.57" stroke="#7a7a7a" stroke-width="1.3"/><path d="M36.20,98.20L36.20,96.40" stroke="#7a7a7a" stroke-width="1.3"/><path d="M37.76,98.84L39.03,97.57" stroke="#7a7a7a" stroke-width="1.3"/><circle cx="36.2" cy="100.4" r="2.5" fill="none" stroke="#7a7a7a" stroke-width="1.3"/><path d="M21.5,110.14l4.4,3l-4.4,3z" fill="none" stroke="#333" stroke-width=".8"/><path d="M32.4,109.94h3.2l.9,1h4.7v5.6h-8.8z" fill="#8d8d8d"/><path d="M21.5,122.88000000000001l4.4,3l-4.4,3z" fill="none" stroke="#333" stroke-width=".8"/><path d="M32.9,125.88000000000001q3.6,-3.6,7.2,0q-3.6,3.6,-7.2,0z" fill="#e6e6e6" stroke="#b8b8b8" stroke-width=".5"/><circle cx="36.5" cy="125.88000000000001" r="1.3" fill="#f4f4f4" stroke="#b8b8b8" stroke-width=".5"/><path d="M45.7,122.68h3.2l.9,1h4.7v5.6h-8.8z" fill="#8d8d8d"/><path d="M26.1,135.62v5.8h-5.6z" fill="#444" stroke="#333" stroke-width=".4"/><path d="M32.9,138.62q3.6,-3.6,7.2,0q-3.6,3.6,-7.2,0z" fill="#8a8a8a" stroke="#6a6a6a" stroke-width=".5"/><circle cx="36.5" cy="138.62" r="1.3" fill="#ededed" stroke="#6a6a6a" stroke-width=".5"/><path d="M45.7,135.42000000000002h3.2l.9,1h4.7v5.6h-8.8z" fill="#8d8d8d"/><path d="M42.6,151.36q3.6,-3.6,7.2,0q-3.6,3.6,-7.2,0z" fill="#8a8a8a" stroke="#6a6a6a" stroke-width=".5"/><circle cx="46.2" cy="151.36" r="1.3" fill="#ededed" stroke="#6a6a6a" stroke-width=".5"/><rect x="55.7" y="146.96" width="7.8" height="8.8" rx="2" fill="#fbfbfb" stroke="#555" stroke-width=".7"/><rect x="58.2" y="149.06" width="2.8" height="4.8" fill="#d4d4d4"/><path d="M42.6,164.10000000000002q3.6,-3.6,7.2,0q-3.6,3.6,-7.2,0z" fill="#8a8a8a" stroke="#6a6a6a" stroke-width=".5"/><circle cx="46.2" cy="164.10000000000002" r="1.3" fill="#ededed" stroke="#6a6a6a" stroke-width=".5"/><rect x="55.7" y="159.70000000000002" width="7.8" height="8.8" rx="2" fill="#fbfbfb" stroke="#555" stroke-width=".7"/><rect x="58.2" y="161.8" width="2.8" height="4.8" fill="#d4d4d4"/><path d="M42.6,176.84q3.6,-3.6,7.2,0q-3.6,3.6,-7.2,0z" fill="#8a8a8a" stroke="#6a6a6a" stroke-width=".5"/><circle cx="46.2" cy="176.84" r="1.3" fill="#ededed" stroke="#6a6a6a" stroke-width=".5"/><rect x="55.7" y="172.44" width="7.8" height="8.8" rx="2" fill="#fbfbfb" stroke="#555" stroke-width=".7"/><rect x="58.2" y="174.54" width="2.8" height="4.8" fill="#d4d4d4"/><path d="M42.6,189.58q3.6,-3.6,7.2,0q-3.6,3.6,-7.2,0z" fill="#8a8a8a" stroke="#6a6a6a" stroke-width=".5"/><circle cx="46.2" cy="189.58" r="1.3" fill="#ededed" stroke="#6a6a6a" stroke-width=".5"/><rect x="55.7" y="185.18" width="7.8" height="8.8" rx="2" fill="#fbfbfb" stroke="#555" stroke-width=".7"/><rect x="58.2" y="187.28" width="2.8" height="4.8" fill="#d4d4d4"/><path d="M42.6,202.32q3.6,-3.6,7.2,0q-3.6,3.6,-7.2,0z" fill="#8a8a8a" stroke="#6a6a6a" stroke-width=".5"/><circle cx="46.2" cy="202.32" r="1.3" fill="#ededed" stroke="#6a6a6a" stroke-width=".5"/><rect x="55.7" y="197.92" width="7.8" height="8.8" rx="2" fill="#fbfbfb" stroke="#555" stroke-width=".7"/><rect x="58.2" y="200.01999999999998" width="2.8" height="4.8" fill="#d4d4d4"/><path d="M42.6,215.06q3.6,-3.6,7.2,0q-3.6,3.6,-7.2,0z" fill="#8a8a8a" stroke="#6a6a6a" stroke-width=".5"/><circle cx="46.2" cy="215.06" r="1.3" fill="#ededed" stroke="#6a6a6a" stroke-width=".5"/><rect x="55.7" y="210.66" width="7.8" height="8.8" rx="2" fill="#fbfbfb" stroke="#555" stroke-width=".7"/><rect x="58.2" y="212.76" width="2.8" height="4.8" fill="#d4d4d4"/><path d="M42.6,227.8q3.6,-3.6,7.2,0q-3.6,3.6,-7.2,0z" fill="#8a8a8a" stroke="#6a6a6a" stroke-width=".5"/><circle cx="46.2" cy="227.8" r="1.3" fill="#ededed" stroke="#6a6a6a" stroke-width=".5"/><rect x="55.7" y="223.4" width="7.8" height="8.8" rx="2" fill="#fbfbfb" stroke="#555" stroke-width=".7"/><rect x="58.2" y="225.5" width="2.8" height="4.8" fill="#d4d4d4"/><path d="M42.6,240.54000000000002q3.6,-3.6,7.2,0q-3.6,3.6,-7.2,0z" fill="#8a8a8a" stroke="#6a6a6a" stroke-width=".5"/><circle cx="46.2" cy="240.54000000000002" r="1.3" fill="#ededed" stroke="#6a6a6a" stroke-width=".5"/><rect x="55.7" y="236.14000000000001" width="7.8" height="8.8" rx="2" fill="#fbfbfb" stroke="#555" stroke-width=".7"/><rect x="58.2" y="238.24" width="2.8" height="4.8" fill="#d4d4d4"/><path d="M42.6,253.28q3.6,-3.6,7.2,0q-3.6,3.6,-7.2,0z" fill="#8a8a8a" stroke="#6a6a6a" stroke-width=".5"/><circle cx="46.2" cy="253.28" r="1.3" fill="#ededed" stroke="#6a6a6a" stroke-width=".5"/><rect x="55.7" y="248.88" width="7.8" height="8.8" rx="2" fill="#fbfbfb" stroke="#555" stroke-width=".7"/><rect x="58.2" y="250.98" width="2.8" height="4.8" fill="#d4d4d4"/><path d="M42.6,266.02q3.6,-3.6,7.2,0q-3.6,3.6,-7.2,0z" fill="#8a8a8a" stroke="#6a6a6a" stroke-width=".5"/><circle cx="46.2" cy="266.02" r="1.3" fill="#ededed" stroke="#6a6a6a" stroke-width=".5"/><rect x="55.7" y="261.62" width="7.8" height="8.8" rx="2" fill="#fbfbfb" stroke="#555" stroke-width=".7"/><rect x="58.2" y="263.71999999999997" width="2.8" height="4.8" fill="#d4d4d4"/><path d="M42.6,278.76q3.6,-3.6,7.2,0q-3.6,3.6,-7.2,0z" fill="#8a8a8a" stroke="#6a6a6a" stroke-width=".5"/><circle cx="46.2" cy="278.76" r="1.3" fill="#ededed" stroke="#6a6a6a" stroke-width=".5"/><rect x="55.7" y="274.36" width="7.8" height="8.8" rx="2" fill="#fbfbfb" stroke="#555" stroke-width=".7"/><rect x="58.2" y="276.46" width="2.8" height="4.8" fill="#d4d4d4"/><path d="M21.5,288.5l4.4,3l-4.4,3z" fill="none" stroke="#333" stroke-width=".8"/><path d="M32.9,291.5q3.6,-3.6,7.2,0q-3.6,3.6,-7.2,0z" fill="#8a8a8a" stroke="#6a6a6a" stroke-width=".5"/><circle cx="36.5" cy="291.5" r="1.3" fill="#ededed" stroke="#6a6a6a" stroke-width=".5"/><path d="M45.7,288.3h3.2l.9,1h4.7v5.6h-8.8z" fill="#8d8d8d"/><path d="M32.5,301.44l1.6,-1.6h5.8v6.4l-1.6,1.6h-5.8z" fill="#3d8fd1"/><rect x="32.5" y="301.44" width="5.8" height="6.4" fill="#5fa9e2"/><path d="M40.8,299.84000000000003v8.4" stroke="#555" stroke-width=".6"/><path d="M32.5,314.18l1.6,-1.6h5.8v6.4l-1.6,1.6h-5.8z" fill="#3d8fd1"/><rect x="32.5" y="314.18" width="5.8" height="6.4" fill="#5fa9e2"/><path d="M40.8,312.58000000000004v8.4" stroke="#555" stroke-width=".6"/><path d="M32.5,326.92l1.6,-1.6h5.8v6.4l-1.6,1.6h-5.8z" fill="#3d8fd1"/><rect x="32.5" y="326.92" width="5.8" height="6.4" fill="#5fa9e2"/><path d="M40.8,325.32000000000005v8.4" stroke="#555" stroke-width=".6"/><path d="M32.5,339.66l1.6,-1.6h5.8v6.4l-1.6,1.6h-5.8z" fill="#3d8fd1"/><rect x="32.5" y="339.66" width="5.8" height="6.4" fill="#5fa9e2"/><path d="M40.8,338.06000000000006v8.4" stroke="#555" stroke-width=".6"/><path d="M32.5,352.40000000000003l1.6,-1.6h5.8v6.4l-1.6,1.6h-5.8z" fill="#3d8fd1"/><rect x="32.5" y="352.40000000000003" width="5.8" height="6.4" fill="#5fa9e2"/><path d="M40.8,350.80000000000007v8.4" stroke="#555" stroke-width=".6"/><path d="M32.5,365.14000000000004l1.6,-1.6h5.8v6.4l-1.6,1.6h-5.8z" fill="#3d8fd1"/><rect x="32.5" y="365.14000000000004" width="5.8" height="6.4" fill="#5fa9e2"/><path d="M40.8,363.5400000000001v8.4" stroke="#555" stroke-width=".6"/><path d="M32.5,377.88000000000005l1.6,-1.6h5.8v6.4l-1.6,1.6h-5.8z" fill="#3d8fd1"/><rect x="32.5" y="377.88000000000005" width="5.8" height="6.4" fill="#5fa9e2"/><path d="M40.8,376.2800000000001v8.4" stroke="#555" stroke-width=".6"/><path d="M32.5,390.61999999999995l1.6,-1.6h5.8v6.4l-1.6,1.6h-5.8z" fill="#3d8fd1"/><rect x="32.5" y="390.61999999999995" width="5.8" height="6.4" fill="#5fa9e2"/><path d="M40.8,389.02v8.4" stroke="#555" stroke-width=".6"/><path d="M32.5,403.35999999999996l1.6,-1.6h5.8v6.4l-1.6,1.6h-5.8z" fill="#3d8fd1"/><rect x="32.5" y="403.35999999999996" width="5.8" height="6.4" fill="#5fa9e2"/><path d="M40.8,401.76v8.4" stroke="#555" stroke-width=".6"/><path d="M32.7,422.9v-5l2.4,-3h3.2l1.6,1.2v5l-1.8,1.8z" fill="#f4f4f4" stroke="#666" stroke-width=".6"/><path d="M35.9,415.09999999999997l2.6,.6l-1,6l-2.4,-1z" fill="#5fa9e2"/><path d="M32.7,435.64v-4.5q0,-3.8,4,-3.8h2l1.8,2v6.3z" fill="#f4f4f4" stroke="#666" stroke-width=".7"/><path d="M35.9,428.03999999999996q3.4,.2,4,3.4" fill="none" stroke="#5fa9e2" stroke-width="1.7"/><path d="M32.5,441.58l1.6,-1.6h5.8v6.4l-1.6,1.6h-5.8z" fill="#3d8fd1"/><rect x="32.5" y="441.58" width="5.8" height="6.4" fill="#5fa9e2"/><path d="M40.8,439.98v8.4" stroke="#555" stroke-width=".6"/><path d="M32.5,454.32l1.6,-1.6h5.8v6.4l-1.6,1.6h-5.8z" fill="#3d8fd1"/><rect x="32.5" y="454.32" width="5.8" height="6.4" fill="#5fa9e2"/><path d="M40.8,452.72v8.4" stroke="#555" stroke-width=".6"/><path d="M32.5,467.06l1.6,-1.6h5.8v6.4l-1.6,1.6h-5.8z" fill="#3d8fd1"/><rect x="32.5" y="467.06" width="5.8" height="6.4" fill="#5fa9e2"/><path d="M40.8,465.46000000000004v8.4" stroke="#555" stroke-width=".6"/><path d="M32.7,486.6v-4.5l3.4,-3.8h2.6l1.8,2v6.3z" fill="#f4f4f4" stroke="#666" stroke-width=".7"/><path d="M32.7,482.1l3.4,-3.8l1.6,1.4l-3.2,3.8z" fill="#5fa9e2"/><path d="M32.7,499.34000000000003v-4.5q0,-3.8,4,-3.8h2l1.8,2v6.3z" fill="#f4f4f4" stroke="#666" stroke-width=".7"/><path d="M35.9,491.74q3.4,.2,4,3.4" fill="none" stroke="#5fa9e2" stroke-width="1.7"/><path d="M32.7,512.08v-5l2.4,-3h3.2l1.6,1.2v5l-1.8,1.8z" fill="#f4f4f4" stroke="#666" stroke-width=".6"/><path d="M35.9,504.28000000000003l2.6,.6l-1,6l-2.4,-1z" fill="#5fa9e2"/><path d="M32.5,518.0200000000001l1.6,-1.6h5.8v6.4l-1.6,1.6h-5.8z" fill="#3d8fd1"/><rect x="32.5" y="518.0200000000001" width="5.8" height="6.4" fill="#5fa9e2"/><path d="M40.8,516.4200000000001v8.4" stroke="#555" stroke-width=".6"/><circle cx="152.4" cy="546.8" r="2.3" fill="#222"/><path d="M151,546.8h2.8M152.4,545.4v2.8" stroke="#eee" stroke-width=".7"/><path d="M158.2,544v5.6M159.6,544v5.6" stroke="#aaa" stroke-width=".6"/></svg>
<svg class="ico" style="left:0;top:0" width="1020" height="560" viewBox="0 0 1020 560"><rect x="446.8" y="541.2" width="125.5" height="11.3" fill="#efefef"/><ellipse cx="452.6" cy="547.6" rx="3.6" ry="1.4" fill="none" stroke="#444" stroke-width=".8"/><path d="M452.6,543.4000000000001v7.6" stroke="#444" stroke-width=".9"/><path d="M452.6,542.8000000000001l1.2,1.6h-2.4z" fill="#333"/><circle cx="450" cy="548.8000000000001" r=".9" fill="#222"/><path d="M459.59999999999997,546.5 h2.6 l-1.3,1.6z" fill="#333"/><rect x="466.2" y="544.6" width="8.6" height="6" rx="1.2" fill="#8d97a6" stroke="#59616e" stroke-width=".6"/><rect x="468.2" y="546.6" width="4.6" height="2.2" rx=".6" fill="#e8e8e8" stroke="#59616e" stroke-width=".4"/><path d="M467.6,544.6l1.2,-1.4h3.6l1.2,1.4" fill="none" stroke="#59616e" stroke-width=".7"/><path d="M481.8,551.0l-2,-3.2l1,-.8l1.2,1.2v-4.2l1,-.4l.5,.5l.6,-1l1,.2l.3,.8l.8,-.4l.7,.6v1l.7,-.2l.5,.6v3.2l-1,2.3z" fill="#f2f2f2" stroke="#555" stroke-width=".6"/><circle cx="496.2" cy="546.6" r="2.5" fill="#dfe9f2" stroke="#555" stroke-width=".8"/><path d="M498,548.4000000000001l2.4,2.6" stroke="#333" stroke-width="1.2"/><path d="M500.3,543.2v2.6M499,544.5h2.6" stroke="#333" stroke-width=".7"/><rect x="507" y="543.2" width="7" height="7.2" fill="none" stroke="#777" stroke-width=".5" stroke-dasharray="1 .8"/><circle cx="510.3" cy="546.4000000000001" r="2.8" fill="#e4eef6" stroke="#666" stroke-width=".8"/><path d="M512.4,548.6l2.4,2.6" stroke="#333" stroke-width="1.2"/><path d="M518.4000000000001,546.5 h2.6 l-1.3,1.6z" fill="#333"/><rect x="525" y="543.4000000000001" width="8.2" height="6" fill="#7fa8dc" stroke="#666" stroke-width=".8"/><path d="M529.1,549.4000000000001v1.4M527,551.0h4.2" stroke="#555" stroke-width=".9"/><path d="M534.7,546.5 h2.6 l-1.3,1.6z" fill="#333"/><rect x="541.2" y="543.2" width="8.2" height="8" fill="#9a9a9a" stroke="#777" stroke-width=".5"/><path d="M543.9,543.2v8M546.6,543.2v8M541.2,545.9000000000001h8.2M541.2,548.6h8.2" stroke="#b4b4b4" stroke-width=".4"/><path d="M551.1,546.5 h2.6 l-1.3,1.6z" fill="#333"/><rect x="557.4" y="543.2" width="8" height="7.6" fill="#6f9bd6" stroke="#5a7fb3" stroke-width=".5"/><path d="M561.4,543.2v7.6M557.4,547.0h8" stroke="#e6eef8" stroke-width=".8"/><path d="M567.5,546.5 h2.6 l-1.3,1.6z" fill="#333"/><defs><filter id="vcb" x="-40%" y="-40%" width="180%" height="180%"><feGaussianBlur stdDeviation="2.5"/></filter></defs><polygon points="967.9,101.8 989.3,112.5 1004.7,99.6 1002.6,116.8 988.8,131.8 968.9,120.0" fill="rgba(120,120,120,.28)" filter="url(#vcb)" transform="translate(1.5,2)"/><polygon points="985.0,90.0 1004.7,99.6 989.3,112.5 967.9,101.8" fill="#efefef" stroke="#8a8a8a" stroke-width=".6" stroke-dasharray="2 1"/><polygon points="967.9,101.8 989.3,112.5 988.8,131.8 968.9,120.0" fill="#e6e6e6" stroke="#8a8a8a" stroke-width=".6" stroke-dasharray="2 1"/><polygon points="989.3,112.5 1004.7,99.6 1002.6,116.8 988.8,131.8" fill="#d9d9d9" stroke="#8a8a8a" stroke-width=".6" stroke-dasharray="2 1"/><path d="M965.7,97.5L968.9,120.4" stroke="#5a6ad8" stroke-width="1"/><path d="M968.9,120.4L992.5,135.0" stroke="#e86a6a" stroke-width="1"/></svg><div class="t" style="left:985.5px;top:101.5px;font-size:8px;color:#666;transform:translate(-50%,-50%) matrix(1,.42,-.9,.55,0,0)">上</div><div class="t" style="left:977.2px;top:116.2px;font-size:8.5px;color:#666;transform:translate(-50%,-50%) matrix(.95,.42,0,1,0,0)">前</div><div class="t" style="left:996.5px;top:116px;font-size:8px;color:#999;transform:translate(-50%,-50%) matrix(.55,-.5,0,1,0,0)">右</div><div class="t" style="left:965.5px;top:95.5px;font-size:6.5px;color:#5a6ad8;font-weight:bold">Z</div><div class="t" style="left:994.5px;top:136.5px;font-size:6px;color:#e86a6a;font-weight:bold">X</div>
<div id="blackTop" class="abs"></div>
<div id="blackRight" class="abs"></div>
<div id="blackBot" class="abs"></div>
<div class="abs" style="left:25px;top:555.3px;width:182px;height:4.7px;background:#f4f4f4"></div>
<div class="abs" style="left:168px;top:557px;width:5px;height:3px;background:#e070d0;border-radius:2px 0 0 0"></div>
<div class="abs" style="left:183px;top:557.5px;width:5px;height:2.5px;background:#3a8ad8;border-radius:2px 2px 0 0"></div>
<div class="abs" style="left:194px;top:556px;width:9px;height:4px;background:#7a9a3a;border-radius:2px"></div>
<div class="abs" style="left:391px;top:555.3px;width:25px;height:4.7px;background:#3a3a3a"></div>
<div class="abs" style="left:547px;top:555.3px;width:25.5px;height:4.7px;background:#a85a1c"></div>
</body></html>
